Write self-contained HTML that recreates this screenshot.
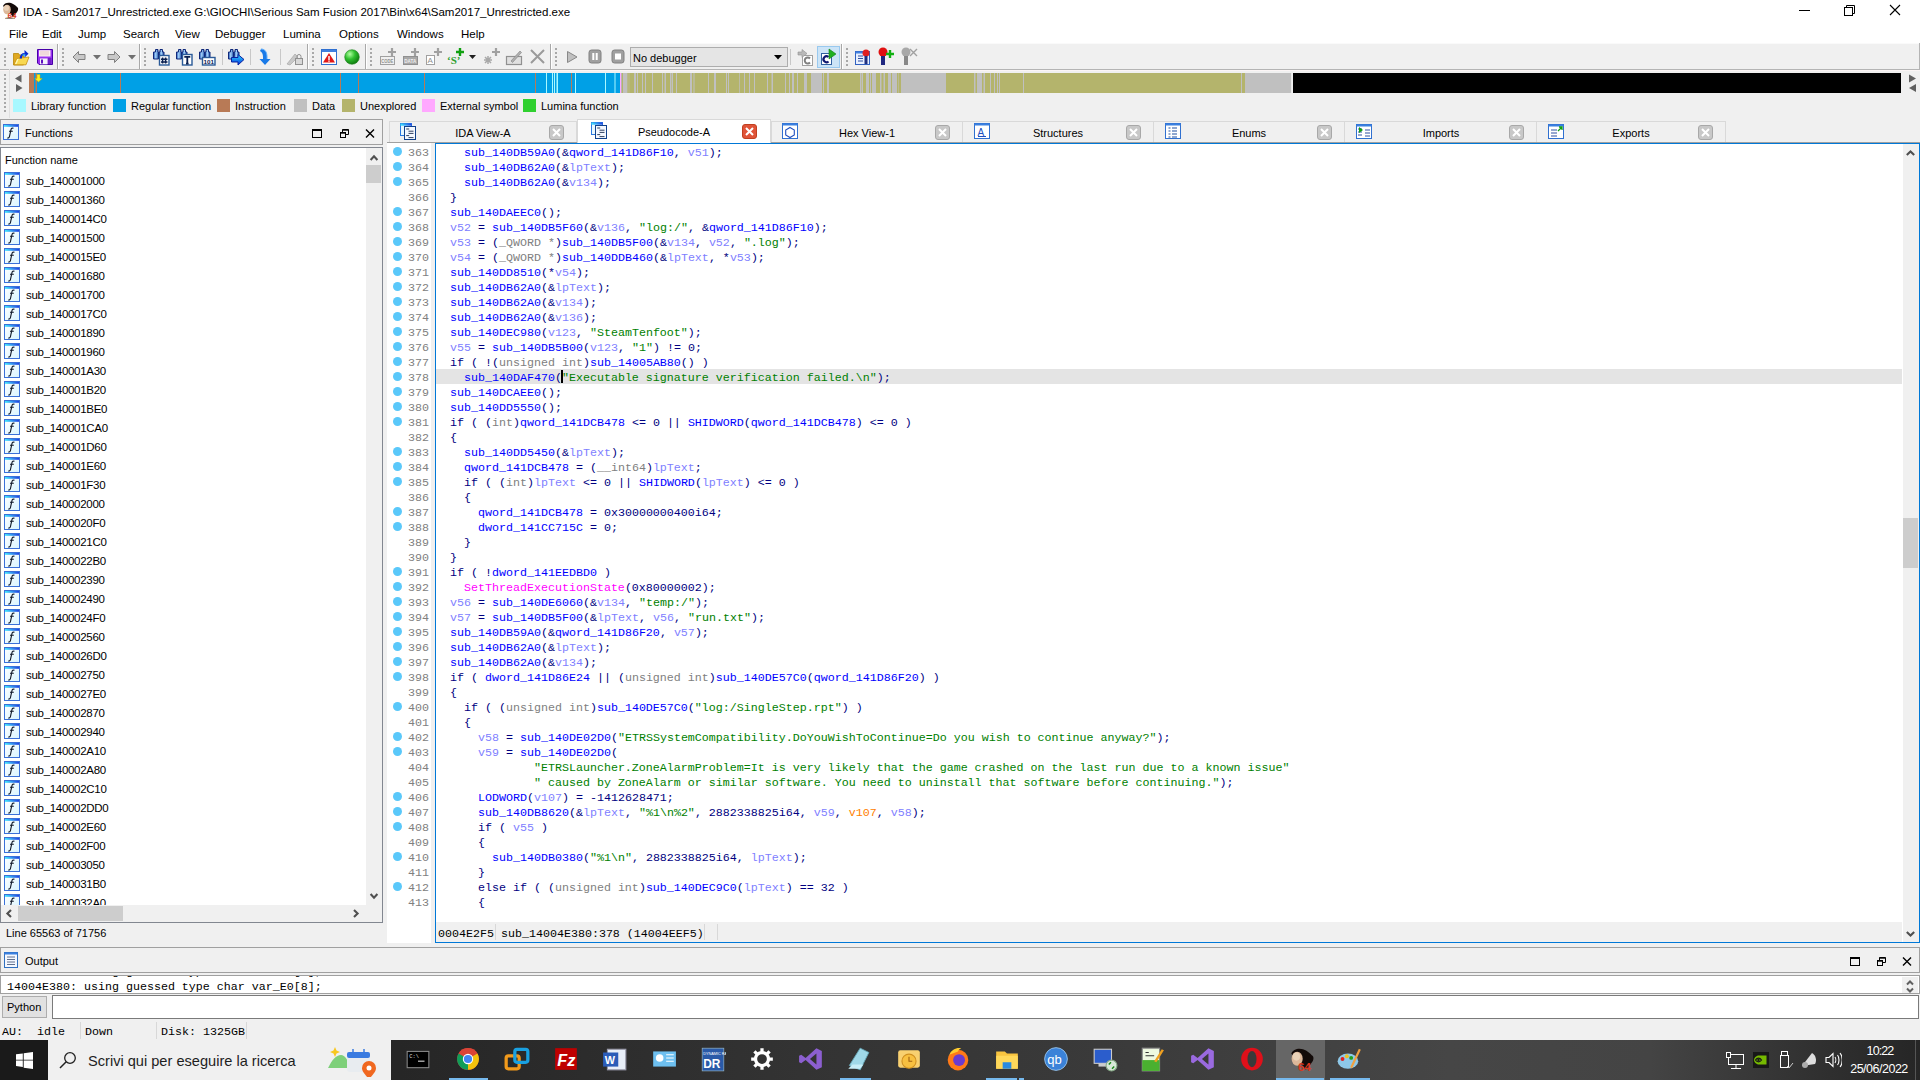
<!DOCTYPE html><html><head><meta charset="utf-8"><style>
*{margin:0;padding:0;box-sizing:border-box}
html,body{width:1920px;height:1080px;overflow:hidden;background:#f0f0f0}
body{position:relative;font-family:"Liberation Sans",sans-serif;font-size:11px;color:#000}
div{position:absolute}
.t{white-space:pre;line-height:13px;font-size:11px}
.m{font-family:"Liberation Mono",monospace;font-size:11.67px;white-space:pre;line-height:15px}
.n{color:#000080}.b{color:#0000ff}.v{color:#8080ff}.g{color:#808080}.s{color:#008000}.p{color:#ff00ff}.o{color:#ff8000}
</style></head><body><svg width="0" height="0" style="position:absolute"><defs><linearGradient id="tb" x1="0" y1="0" x2="1" y2="0"><stop offset="0" stop-color="#40e8ff"/><stop offset="1" stop-color="#2040e0"/></linearGradient></defs></svg><div style="left:0px;top:0px;width:1920px;height:43px;background:#fff"></div>
<svg style="position:absolute;left:0px;top:0px;" width="24" height="24" viewBox="0 0 24 24"><path d="M3 6c1-3 5-4 8-3 3 1 5 3 6 4 2 1 1 4 0 5-1 2-3 3-4 5L9 12z" fill="#120a08"/><ellipse cx="7" cy="9.5" rx="3.8" ry="4.8" fill="#dcb89a"/><ellipse cx="6.5" cy="8" rx="2.5" ry="2.8" fill="#ead2b8"/><path d="M5 18.5c2-1 6-1 10 0" stroke="#b89070" stroke-width="1"/><text x="7.5" y="18" font-size="8" font-family="Liberation Sans" fill="#d83820" font-weight="bold">64</text></svg>
<div class="t" style="left:23px;top:6px;font-size:11.5px">IDA - Sam2017_Unrestricted.exe G:\GIOCHI\Serious Sam Fusion 2017\Bin\x64\Sam2017_Unrestricted.exe</div>
<svg style="position:absolute;left:1795px;top:4px;" width="20" height="14" viewBox="0 0 20 14"><line x1="4" y1="6.5" x2="15" y2="6.5" stroke="#000" stroke-width="1"/></svg>
<svg style="position:absolute;left:1840px;top:2px;" width="20" height="16" viewBox="0 0 20 16"><rect x="4.5" y="5.5" width="8" height="8" fill="none" stroke="#000"/><path d="M6.5 5.5V3.5H14.5V11.5H12.5" fill="none" stroke="#000"/></svg>
<svg style="position:absolute;left:1885px;top:2px;" width="20" height="16" viewBox="0 0 20 16"><path d="M5 3L15 13M15 3L5 13" stroke="#000" stroke-width="1.1"/></svg>
<div class="t" style="left:9px;top:28px;font-size:11.5px">File</div>
<div class="t" style="left:42px;top:28px;font-size:11.5px">Edit</div>
<div class="t" style="left:78px;top:28px;font-size:11.5px">Jump</div>
<div class="t" style="left:123px;top:28px;font-size:11.5px">Search</div>
<div class="t" style="left:175px;top:28px;font-size:11.5px">View</div>
<div class="t" style="left:215px;top:28px;font-size:11.5px">Debugger</div>
<div class="t" style="left:283px;top:28px;font-size:11.5px">Lumina</div>
<div class="t" style="left:339px;top:28px;font-size:11.5px">Options</div>
<div class="t" style="left:397px;top:28px;font-size:11.5px">Windows</div>
<div class="t" style="left:461px;top:28px;font-size:11.5px">Help</div>
<div style="left:0px;top:43px;width:1920px;height:28px;background:#f0f0f0;border-top:1px solid #fafafa;border-bottom:1px solid #fafafa"></div>
<div style="left:0px;top:69px;width:1920px;height:1px;background:#b4b4b4"></div>
<div style="left:1919px;top:43px;width:1px;height:27px;background:#b4b4b4"></div>
<svg style="position:absolute;left:4px;top:48px;" width="2" height="20" viewBox="0 0 2 20"><rect x="0" y="0" width="2" height="2" fill="#a8a8a8"/><rect x="0" y="4" width="2" height="2" fill="#a8a8a8"/><rect x="0" y="8" width="2" height="2" fill="#a8a8a8"/><rect x="0" y="12" width="2" height="2" fill="#a8a8a8"/><rect x="0" y="16" width="2" height="2" fill="#a8a8a8"/></svg>
<svg style="position:absolute;left:62px;top:48px;" width="2" height="20" viewBox="0 0 2 20"><rect x="0" y="0" width="2" height="2" fill="#a8a8a8"/><rect x="0" y="4" width="2" height="2" fill="#a8a8a8"/><rect x="0" y="8" width="2" height="2" fill="#a8a8a8"/><rect x="0" y="12" width="2" height="2" fill="#a8a8a8"/><rect x="0" y="16" width="2" height="2" fill="#a8a8a8"/></svg>
<svg style="position:absolute;left:144px;top:48px;" width="2" height="20" viewBox="0 0 2 20"><rect x="0" y="0" width="2" height="2" fill="#a8a8a8"/><rect x="0" y="4" width="2" height="2" fill="#a8a8a8"/><rect x="0" y="8" width="2" height="2" fill="#a8a8a8"/><rect x="0" y="12" width="2" height="2" fill="#a8a8a8"/><rect x="0" y="16" width="2" height="2" fill="#a8a8a8"/></svg>
<svg style="position:absolute;left:312px;top:48px;" width="2" height="20" viewBox="0 0 2 20"><rect x="0" y="0" width="2" height="2" fill="#a8a8a8"/><rect x="0" y="4" width="2" height="2" fill="#a8a8a8"/><rect x="0" y="8" width="2" height="2" fill="#a8a8a8"/><rect x="0" y="12" width="2" height="2" fill="#a8a8a8"/><rect x="0" y="16" width="2" height="2" fill="#a8a8a8"/></svg>
<svg style="position:absolute;left:370px;top:48px;" width="2" height="20" viewBox="0 0 2 20"><rect x="0" y="0" width="2" height="2" fill="#a8a8a8"/><rect x="0" y="4" width="2" height="2" fill="#a8a8a8"/><rect x="0" y="8" width="2" height="2" fill="#a8a8a8"/><rect x="0" y="12" width="2" height="2" fill="#a8a8a8"/><rect x="0" y="16" width="2" height="2" fill="#a8a8a8"/></svg>
<svg style="position:absolute;left:555px;top:48px;" width="2" height="20" viewBox="0 0 2 20"><rect x="0" y="0" width="2" height="2" fill="#a8a8a8"/><rect x="0" y="4" width="2" height="2" fill="#a8a8a8"/><rect x="0" y="8" width="2" height="2" fill="#a8a8a8"/><rect x="0" y="12" width="2" height="2" fill="#a8a8a8"/><rect x="0" y="16" width="2" height="2" fill="#a8a8a8"/></svg>
<svg style="position:absolute;left:846px;top:48px;" width="2" height="20" viewBox="0 0 2 20"><rect x="0" y="0" width="2" height="2" fill="#a8a8a8"/><rect x="0" y="4" width="2" height="2" fill="#a8a8a8"/><rect x="0" y="8" width="2" height="2" fill="#a8a8a8"/><rect x="0" y="12" width="2" height="2" fill="#a8a8a8"/><rect x="0" y="16" width="2" height="2" fill="#a8a8a8"/></svg>
<div style="left:57px;top:44px;width:2px;height:25px;background:#a8a8a8;border-right:1px solid #fff"></div>
<div style="left:139px;top:44px;width:2px;height:25px;background:#a8a8a8;border-right:1px solid #fff"></div>
<div style="left:307px;top:44px;width:2px;height:25px;background:#a8a8a8;border-right:1px solid #fff"></div>
<div style="left:365px;top:44px;width:2px;height:25px;background:#a8a8a8;border-right:1px solid #fff"></div>
<div style="left:550px;top:44px;width:2px;height:25px;background:#a8a8a8;border-right:1px solid #fff"></div>
<div style="left:841px;top:44px;width:2px;height:25px;background:#a8a8a8;border-right:1px solid #fff"></div>
<div style="left:222px;top:49px;width:1px;height:16px;background:#c8c8c8"></div>
<div style="left:250px;top:49px;width:1px;height:16px;background:#c8c8c8"></div>
<div style="left:280px;top:49px;width:1px;height:16px;background:#c8c8c8"></div>
<div style="left:790px;top:49px;width:1px;height:16px;background:#c8c8c8"></div>
<svg style="position:absolute;left:13px;top:49px;" width="17" height="17" viewBox="0 0 17 17"><path d="M0.5 4.5h5l1 1.5h4v10H0.5z" fill="#e0a820" stroke="#b88808" stroke-width=".8"/><path d="M1.2 15.8L4 9.5 16 8 13 15.8z" fill="#f8d850" stroke="#c89010" stroke-width=".8"/><path d="M1.8 15l2.4-5 1.5-.2-2 5z" fill="#fff8b0"/><path d="M7.8 9.5c0-3 1.5-4.5 4-4.5" fill="none" stroke="#0828d0" stroke-width="2.2"/><path d="M11.5 1l4 3.8-4 3.8z" fill="#0828d0"/><path d="M9.5 6h3" stroke="#30e8ff" stroke-width="1"/></svg>
<svg style="position:absolute;left:37px;top:49px;" width="16" height="16" viewBox="0 0 16 16"><path d="M0.5 0.5h15v15H2l-1.5-1.5z" fill="#9a30f0" stroke="#4800a8" stroke-width="1"/><rect x="2" y="1.2" width="11.5" height="6.3" fill="#fbf0f0"/><rect x="3" y="2" width="9" height="4.5" fill="#f0d8dc"/><rect x="3" y="9.5" width="7.5" height="5.8" fill="#f4f4fc"/><rect x="4" y="10.5" width="2" height="4" fill="#6010c0"/><rect x="11" y="9" width="3.5" height="6" fill="#7020c8"/></svg>
<svg style="position:absolute;left:72px;top:50px;" width="14" height="14" viewBox="0 0 14 14"><path d="M1 7L6.5 1.5V4.5H13V9.5H6.5V12.5z" fill="#c8c8c8" stroke="#808080" stroke-width="1"/></svg>
<svg style="position:absolute;left:93px;top:55px;" width="8" height="5" viewBox="0 0 8 5"><path d="M0 0H8L4 4.5z" fill="#707070"/></svg>
<svg style="position:absolute;left:107px;top:50px;" width="14" height="14" viewBox="0 0 14 14"><path d="M13 7L7.5 1.5V4.5H1V9.5H7.5V12.5z" fill="#c8c8c8" stroke="#808080" stroke-width="1"/></svg>
<svg style="position:absolute;left:128px;top:55px;" width="8" height="5" viewBox="0 0 8 5"><path d="M0 0H8L4 4.5z" fill="#707070"/></svg>
<svg style="position:absolute;left:153px;top:48px;" width="17" height="18" viewBox="0 0 17 18"><defs><linearGradient id="bg153" x1="0" y1="0" x2="1" y2="0"><stop offset="0" stop-color="#2050b0"/><stop offset=".45" stop-color="#a8d8ff"/><stop offset="1" stop-color="#1848a0"/></linearGradient></defs><path d="M2.5 1.5h2.5v2.5h.5v7H0.5v-7h2z" fill="url(#bg153)" stroke="#10287a" stroke-width="1"/><path d="M7 1.5h2.5v2.5h1.5v7H6v-7h1z" fill="url(#bg153)" stroke="#10287a" stroke-width="1"/><rect x="5" y="5.5" width="1.5" height="2" fill="#10287a"/><rect x="6.5" y="7.5" width="9.5" height="9.5" fill="#fff" stroke="#2a5a98" stroke-width="1.4"/><path d="M9.6 9.5v6M12.6 9.5v6M8 11.3h6.5M8 14h6.5" stroke="#0a2050" stroke-width="1.5"/></svg>
<svg style="position:absolute;left:176px;top:48px;" width="17" height="18" viewBox="0 0 17 18"><defs><linearGradient id="bg176" x1="0" y1="0" x2="1" y2="0"><stop offset="0" stop-color="#2050b0"/><stop offset=".45" stop-color="#a8d8ff"/><stop offset="1" stop-color="#1848a0"/></linearGradient></defs><path d="M2.5 1.5h2.5v2.5h.5v7H0.5v-7h2z" fill="url(#bg176)" stroke="#10287a" stroke-width="1"/><path d="M7 1.5h2.5v2.5h1.5v7H6v-7h1z" fill="url(#bg176)" stroke="#10287a" stroke-width="1"/><rect x="5" y="5.5" width="1.5" height="2" fill="#10287a"/><rect x="6.5" y="6.5" width="9.5" height="10.5" fill="#fff" stroke="#2a5a98" stroke-width="1.4"/><path d="M8.3 8.8h6M11.3 8.8v6.8M10 15.6h2.6" stroke="#0a2050" stroke-width="1.8"/></svg>
<svg style="position:absolute;left:199px;top:48px;" width="17" height="18" viewBox="0 0 17 18"><defs><linearGradient id="bg199" x1="0" y1="0" x2="1" y2="0"><stop offset="0" stop-color="#2050b0"/><stop offset=".45" stop-color="#a8d8ff"/><stop offset="1" stop-color="#1848a0"/></linearGradient></defs><path d="M2.5 1.5h2.5v2.5h.5v7H0.5v-7h2z" fill="url(#bg199)" stroke="#10287a" stroke-width="1"/><path d="M7 1.5h2.5v2.5h1.5v7H6v-7h1z" fill="url(#bg199)" stroke="#10287a" stroke-width="1"/><rect x="5" y="5.5" width="1.5" height="2" fill="#10287a"/><rect x="3.5" y="9.5" width="12.5" height="7.5" fill="#fff" stroke="#2a5a98" stroke-width="1.4"/><text x="4.6" y="15.6" font-size="6" font-family="Liberation Sans" font-weight="bold" fill="#0a2050" textLength="10.5" lengthAdjust="spacingAndGlyphs">101</text></svg>
<svg style="position:absolute;left:228px;top:48px;" width="17" height="18" viewBox="0 0 17 18"><defs><linearGradient id="bg228" x1="0" y1="0" x2="1" y2="0"><stop offset="0" stop-color="#2050b0"/><stop offset=".45" stop-color="#a8d8ff"/><stop offset="1" stop-color="#1848a0"/></linearGradient></defs><path d="M2.5 1.5h2.5v2.5h.5v7H0.5v-7h2z" fill="url(#bg228)" stroke="#10287a" stroke-width="1"/><path d="M7 1.5h2.5v2.5h1.5v7H6v-7h1z" fill="url(#bg228)" stroke="#10287a" stroke-width="1"/><rect x="5" y="5.5" width="1.5" height="2" fill="#10287a"/><defs><linearGradient id="ag" x1="0" y1="0" x2="0" y2="1"><stop offset="0" stop-color="#30e0ff"/><stop offset="1" stop-color="#0030e0"/></linearGradient></defs><path d="M3.5 9.5h6.5V6.5l6 5-6 5.5v-3H3.5z" fill="url(#ag)" stroke="#0820a0" stroke-width="1"/></svg>
<svg style="position:absolute;left:258px;top:48px;" width="14" height="18" viewBox="0 0 14 18"><path d="M3 1c4 0 6 3 6 8v2h3.5L7 17 1.5 11H5V9c0-3-1-5-3-6z" fill="#1a7ae8"/><path d="M3 1c4 0 6 3 6 8v2" stroke="#60b0ff" stroke-width="1" fill="none"/></svg>
<svg style="position:absolute;left:286px;top:48px;" width="17" height="18" viewBox="0 0 17 18"><path d="M1 16l8-10 3 3-8 8z" fill="#c8c8c8" stroke="#a0a0a0" stroke-width=".6"/><rect x="9.5" y="10.5" width="7" height="6" fill="#d8d8d8" stroke="#909090"/><path d="M11 10.5v-2a2 2 0 0 1 4 0v2" fill="none" stroke="#909090"/></svg>
<svg style="position:absolute;left:321px;top:49px;" width="16" height="16" viewBox="0 0 16 16"><rect x="0.5" y="0.5" width="15" height="15" fill="#fff" stroke="#3070d0"/><rect x="1" y="1" width="14" height="2" fill="#4080e0"/><path d="M8 4L14 13.5H2z" fill="#e01818"/><rect x="7.3" y="7" width="1.4" height="4" fill="#fff"/><rect x="7.3" y="11.5" width="1.4" height="1.3" fill="#fff"/></svg>
<svg style="position:absolute;left:344px;top:49px;" width="16" height="16" viewBox="0 0 16 16"><defs><radialGradient id="gg" cx="0.35" cy="0.3" r="0.7"><stop offset="0" stop-color="#b0ffa0"/><stop offset="0.5" stop-color="#30c030"/><stop offset="1" stop-color="#108010"/></radialGradient></defs><circle cx="8" cy="8" r="7.3" fill="url(#gg)" stroke="#208020" stroke-width=".6"/></svg>
<svg style="position:absolute;left:379px;top:47px;" width="18" height="19" viewBox="0 0 18 19"><rect x="1.5" y="9.5" width="14" height="8" fill="#f0f0f0" stroke="#a0a0a0"/><text x="2.2" y="16.3" font-size="5" font-family="Liberation Sans" font-weight="bold" fill="#909090" textLength="12" lengthAdjust="spacingAndGlyphs">CODE</text><path d="M13 1v8M9 5h8" stroke="#a0a0a0" stroke-width="2.2"/></svg>
<svg style="position:absolute;left:402px;top:47px;" width="18" height="19" viewBox="0 0 18 19"><rect x="1.5" y="9.5" width="14" height="8" fill="#a8a8a8" stroke="#909090"/><text x="2.2" y="16.3" font-size="5" font-family="Liberation Sans" font-weight="bold" fill="#f0f0f0" textLength="12" lengthAdjust="spacingAndGlyphs">DATA</text><path d="M13 1v8M9 5h8" stroke="#a0a0a0" stroke-width="2.2"/></svg>
<svg style="position:absolute;left:425px;top:47px;" width="18" height="19" viewBox="0 0 18 19"><rect x="1.5" y="8.5" width="8" height="9" fill="#fff" stroke="#a0a0a0"/><text x="2.5" y="16" font-size="8" font-family="Liberation Sans" fill="#909090">A</text><path d="M13 1v8M9 5h8" stroke="#a0a0a0" stroke-width="2.2"/></svg>
<svg style="position:absolute;left:447px;top:47px;" width="18" height="19" viewBox="0 0 18 19"><text x="0" y="17" font-size="11" font-family="Liberation Serif" font-weight="bold" fill="#30a030">‘S’</text><path d="M13 1v8M9 5h8" stroke="#10a010" stroke-width="2.4"/></svg>
<svg style="position:absolute;left:469px;top:55px;" width="7" height="5" viewBox="0 0 7 5"><path d="M0 0H7L3.5 4z" fill="#202020"/></svg>
<svg style="position:absolute;left:483px;top:47px;" width="18" height="19" viewBox="0 0 18 19"><path d="M5 9v8M1 13h8M2 10l6 6M8 10l-6 6" stroke="#a8a8a8" stroke-width="1.5"/><path d="M13 1v8M9 5h8" stroke="#a0a0a0" stroke-width="2.2"/></svg>
<svg style="position:absolute;left:505px;top:47px;" width="18" height="19" viewBox="0 0 18 19"><rect x="1.5" y="9.5" width="15" height="8" fill="#e0e0e0" stroke="#909090" stroke-width="1.2"/><path d="M6 14l9-10 1.5 1.5-9 10z" fill="#b0b0b0" stroke="#808080" stroke-width=".6"/></svg>
<svg style="position:absolute;left:529px;top:48px;" width="17" height="17" viewBox="0 0 17 17"><path d="M2 2L15 15M15 2L2 15" stroke="#9a9a9a" stroke-width="2"/></svg>
<svg style="position:absolute;left:566px;top:50px;" width="12" height="14" viewBox="0 0 12 14"><path d="M1.5 1.5L11 7l-9.5 5.5z" fill="#c0c0c0" stroke="#888" stroke-width="1"/></svg>
<svg style="position:absolute;left:588px;top:49px;" width="14" height="15" viewBox="0 0 14 15"><rect x="1" y="1" width="12" height="13" rx="2.5" fill="#a0a0a0" stroke="#808080"/><rect x="4.3" y="4" width="2" height="7" fill="#fff"/><rect x="7.7" y="4" width="2" height="7" fill="#fff"/></svg>
<svg style="position:absolute;left:611px;top:49px;" width="14" height="15" viewBox="0 0 14 15"><rect x="1" y="1" width="12" height="13" rx="2.5" fill="#a0a0a0" stroke="#808080"/><rect x="4" y="4.5" width="6" height="6" fill="#fff"/></svg>
<div style="left:630px;top:47px;width:158px;height:20px;background:#e5e5e5;border:1px solid #adadad"><div class="t" style="left:2px;top:4px;font-size:11px">No debugger</div></div>
<svg style="position:absolute;left:774px;top:55px;" width="9" height="6" viewBox="0 0 9 6"><path d="M0 0H8L4 4.5z" fill="#000"/></svg>
<svg style="position:absolute;left:797px;top:48px;" width="17" height="18" viewBox="0 0 17 18"><rect x="5.5" y="7.5" width="10" height="10" fill="#fff" stroke="#a0a0a0"/><path d="M13 10.5a3 3 0 1 0 0 4" fill="none" stroke="#808080" stroke-width="2"/><path d="M1 4h4V1.5l5 4-5 4V7H1z" fill="#b8b8b8" stroke="#909090" stroke-width=".6"/></svg>
<div style="left:817px;top:46px;width:23px;height:22px;background:#cce4f7;border:1px solid #99c9ef"></div>
<svg style="position:absolute;left:820px;top:48px;" width="18" height="18" viewBox="0 0 18 18"><rect x="1.5" y="5.5" width="10" height="11" fill="#fff" stroke="#3060a0"/><path d="M8.5 9a3 3 0 1 0 0 4.5" fill="none" stroke="#101870" stroke-width="2.2"/><path d="M9 1v10l7-5z" fill="#20b020" stroke="#108010" stroke-width=".6"/></svg>
<svg style="position:absolute;left:854px;top:48px;" width="18" height="18" viewBox="0 0 18 18"><rect x="1.5" y="3.5" width="14" height="13" fill="#e8f0ff" stroke="#3060c0"/><rect x="1.5" y="3.5" width="14" height="2" fill="#4080e0"/><path d="M4 8h5M4 10.5h5M4 13h5" stroke="#3050a0"/><circle cx="12" cy="5" r="3.5" fill="#e02020"/><rect x="10.5" y="8" width="3" height="8" fill="#203080"/></svg>
<svg style="position:absolute;left:877px;top:47px;" width="18" height="19" viewBox="0 0 18 19"><circle cx="6" cy="5" r="4.5" fill="#e01010"/><rect x="4" y="9" width="4" height="9" fill="#202880"/><path d="M13 3v8M9 7h8" stroke="#10b010" stroke-width="2.4"/></svg>
<svg style="position:absolute;left:900px;top:47px;" width="18" height="19" viewBox="0 0 18 19"><circle cx="6" cy="5" r="4.5" fill="#a8a8a8"/><rect x="4" y="9" width="4" height="9" fill="#888"/><path d="M10 2l7 7M17 2l-7 7" stroke="#a0a0a0" stroke-width="1.4"/></svg>
<div style="left:0px;top:70px;width:1920px;height:49px;background:#f0f0f0;border-top:1px solid #fbf5f5"></div>
<svg style="position:absolute;left:4px;top:74px;" width="2" height="40" viewBox="0 0 2 40"><rect x="0" y="0" width="2" height="2" fill="#a8a8a8"/><rect x="0" y="4" width="2" height="2" fill="#a8a8a8"/><rect x="0" y="8" width="2" height="2" fill="#a8a8a8"/><rect x="0" y="12" width="2" height="2" fill="#a8a8a8"/><rect x="0" y="16" width="2" height="2" fill="#a8a8a8"/><rect x="0" y="20" width="2" height="2" fill="#a8a8a8"/><rect x="0" y="24" width="2" height="2" fill="#a8a8a8"/><rect x="0" y="28" width="2" height="2" fill="#a8a8a8"/><rect x="0" y="32" width="2" height="2" fill="#a8a8a8"/><rect x="0" y="36" width="2" height="2" fill="#a8a8a8"/></svg>
<div style="left:9px;top:69px;width:1px;height:49px;background:#e0e0e0"></div>
<svg style="position:absolute;left:13px;top:73px;" width="10" height="20" viewBox="0 0 10 20"><path d="M8.5 1.5v8L2 5.5z" fill="#606060"/><path d="M3 11v8l6.5-4z" fill="#606060"/></svg>
<svg style="position:absolute;left:1906px;top:73px;" width="12" height="20" viewBox="0 0 12 20"><path d="M3 1.5v8L10 5.5z" fill="#606060"/><path d="M10 11v8L3 15z" fill="#606060"/></svg>
<svg style="position:absolute;left:29px;top:73px;" width="1872" height="20" viewBox="0 0 1872 20"><rect x="0.0" y="0" width="592.5" height="20" fill="#00a0e6"/><rect x="0.0" y="0" width="5.0" height="20" fill="#b87a56"/><rect x="6.5" y="0" width="1.5" height="20" fill="#b87a56"/><rect x="91.0" y="0" width="1.0" height="20" fill="#b87a56"/><rect x="311.0" y="0" width="1.0" height="20" fill="#b87a56"/><rect x="329.0" y="0" width="1.0" height="20" fill="#b87a56"/><rect x="395.0" y="0" width="1.0" height="20" fill="#b87a56"/><rect x="506.0" y="0" width="1.0" height="20" fill="#b87a56"/><rect x="517.0" y="0" width="1.0" height="20" fill="#a8f8ff"/><rect x="523.0" y="0" width="1.0" height="20" fill="#a8f8ff"/><rect x="525.0" y="0" width="1.0" height="20" fill="#a8f8ff"/><rect x="527.5" y="0" width="1.5" height="20" fill="#a8f8ff"/><rect x="542.0" y="0" width="1.0" height="20" fill="#b87a56"/><rect x="546.0" y="0" width="1.0" height="20" fill="#a8f8ff"/><rect x="576.0" y="0" width="1.0" height="20" fill="#a8f8ff"/><rect x="585.5" y="0" width="1.0" height="20" fill="#a8f8ff"/><rect x="591.0" y="0" width="1.5" height="20" fill="#ffa8ff"/><rect x="592.5" y="0" width="669.5" height="20" fill="#b4b46c"/><rect x="594.0" y="0" width="4.4" height="20" fill="#c0c0c0"/><rect x="599.8" y="0" width="0.4" height="20" fill="#c0c0c0"/><rect x="605.0" y="0" width="2.0" height="20" fill="#c0c0c0"/><rect x="608.0" y="0" width="1.0" height="20" fill="#c0c0c0"/><rect x="613.0" y="0" width="1.0" height="20" fill="#c0c0c0"/><rect x="616.0" y="0" width="1.0" height="20" fill="#c0c0c0"/><rect x="623.0" y="0" width="1.0" height="20" fill="#c0c0c0"/><rect x="633.0" y="0" width="1.0" height="20" fill="#c0c0c0"/><rect x="635.5" y="0" width="1.5" height="20" fill="#c0c0c0"/><rect x="641.0" y="0" width="1.5" height="20" fill="#c0c0c0"/><rect x="643.0" y="0" width="1.0" height="20" fill="#c0c0c0"/><rect x="647.0" y="0" width="1.0" height="20" fill="#c0c0c0"/><rect x="661.0" y="0" width="2.0" height="20" fill="#c0c0c0"/><rect x="664.5" y="0" width="1.0" height="20" fill="#c0c0c0"/><rect x="679.0" y="0" width="1.0" height="20" fill="#c0c0c0"/><rect x="685.0" y="0" width="2.0" height="20" fill="#c0c0c0"/><rect x="697.0" y="0" width="1.0" height="20" fill="#c0c0c0"/><rect x="699.0" y="0" width="1.0" height="20" fill="#c0c0c0"/><rect x="710.0" y="0" width="0.7" height="20" fill="#c0c0c0"/><rect x="715.0" y="0" width="1.0" height="20" fill="#c0c0c0"/><rect x="720.0" y="0" width="1.0" height="20" fill="#c0c0c0"/><rect x="725.0" y="0" width="1.0" height="20" fill="#c0c0c0"/><rect x="738.0" y="0" width="1.0" height="20" fill="#c0c0c0"/><rect x="742.5" y="0" width="1.5" height="20" fill="#c0c0c0"/><rect x="756.0" y="0" width="1.0" height="20" fill="#c0c0c0"/><rect x="760.0" y="0" width="1.0" height="20" fill="#c0c0c0"/><rect x="763.0" y="0" width="2.0" height="20" fill="#c0c0c0"/><rect x="768.0" y="0" width="1.0" height="20" fill="#c0c0c0"/><rect x="775.0" y="0" width="3.0" height="20" fill="#c0c0c0"/><rect x="782.0" y="0" width="11.0" height="20" fill="#c0c0c0"/><rect x="794.0" y="0" width="1.0" height="20" fill="#c0c0c0"/><rect x="798.0" y="0" width="2.0" height="20" fill="#c0c0c0"/><rect x="831.0" y="0" width="1.5" height="20" fill="#c0c0c0"/><rect x="833.0" y="0" width="1.0" height="20" fill="#c0c0c0"/><rect x="837.0" y="0" width="3.0" height="20" fill="#c0c0c0"/><rect x="841.0" y="0" width="1.0" height="20" fill="#c0c0c0"/><rect x="843.0" y="0" width="4.0" height="20" fill="#c0c0c0"/><rect x="851.0" y="0" width="1.5" height="20" fill="#c0c0c0"/><rect x="854.5" y="0" width="1.5" height="20" fill="#c0c0c0"/><rect x="859.0" y="0" width="3.0" height="20" fill="#c0c0c0"/><rect x="863.0" y="0" width="5.0" height="20" fill="#c0c0c0"/><rect x="869.5" y="0" width="0.5" height="20" fill="#c0c0c0"/><rect x="872.0" y="0" width="45.0" height="20" fill="#c0c0c0"/><rect x="945.0" y="0" width="1.5" height="20" fill="#c0c0c0"/><rect x="948.0" y="0" width="5.0" height="20" fill="#c0c0c0"/><rect x="954.5" y="0" width="1.5" height="20" fill="#c0c0c0"/><rect x="961.0" y="0" width="1.0" height="20" fill="#c0c0c0"/><rect x="965.0" y="0" width="1.0" height="20" fill="#c0c0c0"/><rect x="968.0" y="0" width="1.0" height="20" fill="#c0c0c0"/><rect x="970.0" y="0" width="1.0" height="20" fill="#c0c0c0"/><rect x="994.0" y="0" width="1.0" height="20" fill="#c0c0c0"/><rect x="1212.0" y="0" width="1.0" height="20" fill="#c0c0c0"/><rect x="1216.0" y="0" width="46.0" height="20" fill="#c0c0c0"/><rect x="1262.0" y="0" width="1.0" height="20" fill="#e8e8e8"/><rect x="1264.0" y="0" width="608.0" height="20" fill="#000"/><path d="M8 1.5h3v4h2.2L9.5 9 5.8 5.5H8z" fill="#f8f020" stroke="#c8a800" stroke-width=".5"/></svg>
<div style="left:13px;top:99px;width:13px;height:13px;background:#a8f8ff"></div>
<div class="t" style="left:31px;top:100px;">Library function</div>
<div style="left:113px;top:99px;width:13px;height:13px;background:#00a0e6"></div>
<div class="t" style="left:131px;top:100px;">Regular function</div>
<div style="left:217px;top:99px;width:13px;height:13px;background:#b87a56"></div>
<div class="t" style="left:235px;top:100px;">Instruction</div>
<div style="left:294px;top:99px;width:13px;height:13px;background:#c0c0c0"></div>
<div class="t" style="left:312px;top:100px;">Data</div>
<div style="left:342px;top:99px;width:13px;height:13px;background:#b4b46c"></div>
<div class="t" style="left:360px;top:100px;">Unexplored</div>
<div style="left:422px;top:99px;width:13px;height:13px;background:#ffa8ff"></div>
<div class="t" style="left:440px;top:100px;">External symbol</div>
<div style="left:523px;top:99px;width:13px;height:13px;background:#30d030"></div>
<div class="t" style="left:541px;top:100px;">Lumina function</div>
<div style="left:0px;top:119px;width:383px;height:26px;background:#f0f0f0;border:1px solid #a0a0a0"></div>
<svg style="position:absolute;left:3px;top:124px;" width="16" height="16" viewBox="0 0 16 16"><defs><linearGradient id="fg" x1="0" y1="0" x2="1" y2="1"><stop offset="0" stop-color="#fff"/><stop offset="1" stop-color="#d8f4ff"/></linearGradient></defs><rect x="0.5" y="0.5" width="15" height="15" fill="url(#fg)" stroke="#3a70d8"/><rect x="1" y="1" width="14" height="1.8" fill="url(#tb)"/><path d="M10.5 4.2c-1.4-.4-2.3.2-2.6 1.6l-1.4 6.6c-.3 1.4-1.1 1.9-2.3 1.5M6 7.3h3.8" fill="none" stroke="#101828" stroke-width="1.1"/></svg>
<div class="t" style="left:25px;top:127px;">Functions</div>
<svg style="position:absolute;left:310px;top:126px;" width="14" height="14" viewBox="0 0 14 14"><rect x="2.5" y="3.5" width="9" height="8" fill="none" stroke="#000"/><rect x="2.5" y="3.5" width="9" height="1.5" fill="#000"/></svg>
<svg style="position:absolute;left:337px;top:126px;" width="14" height="14" viewBox="0 0 14 14"><rect x="3.5" y="6.5" width="5" height="5" fill="none" stroke="#000"/><rect x="3.5" y="6.5" width="5" height="1.2" fill="#000"/><path d="M5.5 6.5v-3h6v5h-3" fill="none" stroke="#000"/><rect x="5.5" y="3.5" width="6" height="1.2" fill="#000"/></svg>
<svg style="position:absolute;left:363px;top:126px;" width="14" height="14" viewBox="0 0 14 14"><path d="M3 3.5L11 11.5M11 3.5L3 11.5" stroke="#000" stroke-width="1.4"/></svg>
<div style="left:0px;top:147px;width:383px;height:776px;background:#fff;border:1px solid #828790"></div>
<div class="t" style="left:5px;top:154px;">Function name</div>
<div style="left:1px;top:149px;width:365px;height:756px;overflow:hidden">
<svg style="position:absolute;left:3px;top:23px;" width="16" height="16" viewBox="0 0 16 16"><defs><linearGradient id="fg0" x1="0" y1="0" x2="1" y2="1"><stop offset="0" stop-color="#fff"/><stop offset="1" stop-color="#d8f4ff"/></linearGradient></defs><rect x="0.5" y="0.5" width="15" height="15" fill="url(#fg0)" stroke="#3a70d8"/><rect x="1" y="1" width="14" height="1.8" fill="url(#tb)"/><path d="M10.5 4.2c-1.4-.4-2.3.2-2.6 1.6l-1.4 6.6c-.3 1.4-1.1 1.9-2.3 1.5M6 7.3h3.8" fill="none" stroke="#101828" stroke-width="1.1"/></svg>
<div class="t" style="left:25px;top:26px;font-size:11.5px;letter-spacing:-0.3px">sub_140001000</div>
<svg style="position:absolute;left:3px;top:42px;" width="16" height="16" viewBox="0 0 16 16"><defs><linearGradient id="fg1" x1="0" y1="0" x2="1" y2="1"><stop offset="0" stop-color="#fff"/><stop offset="1" stop-color="#d8f4ff"/></linearGradient></defs><rect x="0.5" y="0.5" width="15" height="15" fill="url(#fg1)" stroke="#3a70d8"/><rect x="1" y="1" width="14" height="1.8" fill="url(#tb)"/><path d="M10.5 4.2c-1.4-.4-2.3.2-2.6 1.6l-1.4 6.6c-.3 1.4-1.1 1.9-2.3 1.5M6 7.3h3.8" fill="none" stroke="#101828" stroke-width="1.1"/></svg>
<div class="t" style="left:25px;top:45px;font-size:11.5px;letter-spacing:-0.3px">sub_140001360</div>
<svg style="position:absolute;left:3px;top:61px;" width="16" height="16" viewBox="0 0 16 16"><defs><linearGradient id="fg2" x1="0" y1="0" x2="1" y2="1"><stop offset="0" stop-color="#fff"/><stop offset="1" stop-color="#d8f4ff"/></linearGradient></defs><rect x="0.5" y="0.5" width="15" height="15" fill="url(#fg2)" stroke="#3a70d8"/><rect x="1" y="1" width="14" height="1.8" fill="url(#tb)"/><path d="M10.5 4.2c-1.4-.4-2.3.2-2.6 1.6l-1.4 6.6c-.3 1.4-1.1 1.9-2.3 1.5M6 7.3h3.8" fill="none" stroke="#101828" stroke-width="1.1"/></svg>
<div class="t" style="left:25px;top:64px;font-size:11.5px;letter-spacing:-0.3px">sub_1400014C0</div>
<svg style="position:absolute;left:3px;top:80px;" width="16" height="16" viewBox="0 0 16 16"><defs><linearGradient id="fg3" x1="0" y1="0" x2="1" y2="1"><stop offset="0" stop-color="#fff"/><stop offset="1" stop-color="#d8f4ff"/></linearGradient></defs><rect x="0.5" y="0.5" width="15" height="15" fill="url(#fg3)" stroke="#3a70d8"/><rect x="1" y="1" width="14" height="1.8" fill="url(#tb)"/><path d="M10.5 4.2c-1.4-.4-2.3.2-2.6 1.6l-1.4 6.6c-.3 1.4-1.1 1.9-2.3 1.5M6 7.3h3.8" fill="none" stroke="#101828" stroke-width="1.1"/></svg>
<div class="t" style="left:25px;top:83px;font-size:11.5px;letter-spacing:-0.3px">sub_140001500</div>
<svg style="position:absolute;left:3px;top:99px;" width="16" height="16" viewBox="0 0 16 16"><defs><linearGradient id="fg4" x1="0" y1="0" x2="1" y2="1"><stop offset="0" stop-color="#fff"/><stop offset="1" stop-color="#d8f4ff"/></linearGradient></defs><rect x="0.5" y="0.5" width="15" height="15" fill="url(#fg4)" stroke="#3a70d8"/><rect x="1" y="1" width="14" height="1.8" fill="url(#tb)"/><path d="M10.5 4.2c-1.4-.4-2.3.2-2.6 1.6l-1.4 6.6c-.3 1.4-1.1 1.9-2.3 1.5M6 7.3h3.8" fill="none" stroke="#101828" stroke-width="1.1"/></svg>
<div class="t" style="left:25px;top:102px;font-size:11.5px;letter-spacing:-0.3px">sub_1400015E0</div>
<svg style="position:absolute;left:3px;top:118px;" width="16" height="16" viewBox="0 0 16 16"><defs><linearGradient id="fg5" x1="0" y1="0" x2="1" y2="1"><stop offset="0" stop-color="#fff"/><stop offset="1" stop-color="#d8f4ff"/></linearGradient></defs><rect x="0.5" y="0.5" width="15" height="15" fill="url(#fg5)" stroke="#3a70d8"/><rect x="1" y="1" width="14" height="1.8" fill="url(#tb)"/><path d="M10.5 4.2c-1.4-.4-2.3.2-2.6 1.6l-1.4 6.6c-.3 1.4-1.1 1.9-2.3 1.5M6 7.3h3.8" fill="none" stroke="#101828" stroke-width="1.1"/></svg>
<div class="t" style="left:25px;top:121px;font-size:11.5px;letter-spacing:-0.3px">sub_140001680</div>
<svg style="position:absolute;left:3px;top:137px;" width="16" height="16" viewBox="0 0 16 16"><defs><linearGradient id="fg6" x1="0" y1="0" x2="1" y2="1"><stop offset="0" stop-color="#fff"/><stop offset="1" stop-color="#d8f4ff"/></linearGradient></defs><rect x="0.5" y="0.5" width="15" height="15" fill="url(#fg6)" stroke="#3a70d8"/><rect x="1" y="1" width="14" height="1.8" fill="url(#tb)"/><path d="M10.5 4.2c-1.4-.4-2.3.2-2.6 1.6l-1.4 6.6c-.3 1.4-1.1 1.9-2.3 1.5M6 7.3h3.8" fill="none" stroke="#101828" stroke-width="1.1"/></svg>
<div class="t" style="left:25px;top:140px;font-size:11.5px;letter-spacing:-0.3px">sub_140001700</div>
<svg style="position:absolute;left:3px;top:156px;" width="16" height="16" viewBox="0 0 16 16"><defs><linearGradient id="fg7" x1="0" y1="0" x2="1" y2="1"><stop offset="0" stop-color="#fff"/><stop offset="1" stop-color="#d8f4ff"/></linearGradient></defs><rect x="0.5" y="0.5" width="15" height="15" fill="url(#fg7)" stroke="#3a70d8"/><rect x="1" y="1" width="14" height="1.8" fill="url(#tb)"/><path d="M10.5 4.2c-1.4-.4-2.3.2-2.6 1.6l-1.4 6.6c-.3 1.4-1.1 1.9-2.3 1.5M6 7.3h3.8" fill="none" stroke="#101828" stroke-width="1.1"/></svg>
<div class="t" style="left:25px;top:159px;font-size:11.5px;letter-spacing:-0.3px">sub_1400017C0</div>
<svg style="position:absolute;left:3px;top:175px;" width="16" height="16" viewBox="0 0 16 16"><defs><linearGradient id="fg8" x1="0" y1="0" x2="1" y2="1"><stop offset="0" stop-color="#fff"/><stop offset="1" stop-color="#d8f4ff"/></linearGradient></defs><rect x="0.5" y="0.5" width="15" height="15" fill="url(#fg8)" stroke="#3a70d8"/><rect x="1" y="1" width="14" height="1.8" fill="url(#tb)"/><path d="M10.5 4.2c-1.4-.4-2.3.2-2.6 1.6l-1.4 6.6c-.3 1.4-1.1 1.9-2.3 1.5M6 7.3h3.8" fill="none" stroke="#101828" stroke-width="1.1"/></svg>
<div class="t" style="left:25px;top:178px;font-size:11.5px;letter-spacing:-0.3px">sub_140001890</div>
<svg style="position:absolute;left:3px;top:194px;" width="16" height="16" viewBox="0 0 16 16"><defs><linearGradient id="fg9" x1="0" y1="0" x2="1" y2="1"><stop offset="0" stop-color="#fff"/><stop offset="1" stop-color="#d8f4ff"/></linearGradient></defs><rect x="0.5" y="0.5" width="15" height="15" fill="url(#fg9)" stroke="#3a70d8"/><rect x="1" y="1" width="14" height="1.8" fill="url(#tb)"/><path d="M10.5 4.2c-1.4-.4-2.3.2-2.6 1.6l-1.4 6.6c-.3 1.4-1.1 1.9-2.3 1.5M6 7.3h3.8" fill="none" stroke="#101828" stroke-width="1.1"/></svg>
<div class="t" style="left:25px;top:197px;font-size:11.5px;letter-spacing:-0.3px">sub_140001960</div>
<svg style="position:absolute;left:3px;top:213px;" width="16" height="16" viewBox="0 0 16 16"><defs><linearGradient id="fg10" x1="0" y1="0" x2="1" y2="1"><stop offset="0" stop-color="#fff"/><stop offset="1" stop-color="#d8f4ff"/></linearGradient></defs><rect x="0.5" y="0.5" width="15" height="15" fill="url(#fg10)" stroke="#3a70d8"/><rect x="1" y="1" width="14" height="1.8" fill="url(#tb)"/><path d="M10.5 4.2c-1.4-.4-2.3.2-2.6 1.6l-1.4 6.6c-.3 1.4-1.1 1.9-2.3 1.5M6 7.3h3.8" fill="none" stroke="#101828" stroke-width="1.1"/></svg>
<div class="t" style="left:25px;top:216px;font-size:11.5px;letter-spacing:-0.3px">sub_140001A30</div>
<svg style="position:absolute;left:3px;top:232px;" width="16" height="16" viewBox="0 0 16 16"><defs><linearGradient id="fg11" x1="0" y1="0" x2="1" y2="1"><stop offset="0" stop-color="#fff"/><stop offset="1" stop-color="#d8f4ff"/></linearGradient></defs><rect x="0.5" y="0.5" width="15" height="15" fill="url(#fg11)" stroke="#3a70d8"/><rect x="1" y="1" width="14" height="1.8" fill="url(#tb)"/><path d="M10.5 4.2c-1.4-.4-2.3.2-2.6 1.6l-1.4 6.6c-.3 1.4-1.1 1.9-2.3 1.5M6 7.3h3.8" fill="none" stroke="#101828" stroke-width="1.1"/></svg>
<div class="t" style="left:25px;top:235px;font-size:11.5px;letter-spacing:-0.3px">sub_140001B20</div>
<svg style="position:absolute;left:3px;top:251px;" width="16" height="16" viewBox="0 0 16 16"><defs><linearGradient id="fg12" x1="0" y1="0" x2="1" y2="1"><stop offset="0" stop-color="#fff"/><stop offset="1" stop-color="#d8f4ff"/></linearGradient></defs><rect x="0.5" y="0.5" width="15" height="15" fill="url(#fg12)" stroke="#3a70d8"/><rect x="1" y="1" width="14" height="1.8" fill="url(#tb)"/><path d="M10.5 4.2c-1.4-.4-2.3.2-2.6 1.6l-1.4 6.6c-.3 1.4-1.1 1.9-2.3 1.5M6 7.3h3.8" fill="none" stroke="#101828" stroke-width="1.1"/></svg>
<div class="t" style="left:25px;top:254px;font-size:11.5px;letter-spacing:-0.3px">sub_140001BE0</div>
<svg style="position:absolute;left:3px;top:270px;" width="16" height="16" viewBox="0 0 16 16"><defs><linearGradient id="fg13" x1="0" y1="0" x2="1" y2="1"><stop offset="0" stop-color="#fff"/><stop offset="1" stop-color="#d8f4ff"/></linearGradient></defs><rect x="0.5" y="0.5" width="15" height="15" fill="url(#fg13)" stroke="#3a70d8"/><rect x="1" y="1" width="14" height="1.8" fill="url(#tb)"/><path d="M10.5 4.2c-1.4-.4-2.3.2-2.6 1.6l-1.4 6.6c-.3 1.4-1.1 1.9-2.3 1.5M6 7.3h3.8" fill="none" stroke="#101828" stroke-width="1.1"/></svg>
<div class="t" style="left:25px;top:273px;font-size:11.5px;letter-spacing:-0.3px">sub_140001CA0</div>
<svg style="position:absolute;left:3px;top:289px;" width="16" height="16" viewBox="0 0 16 16"><defs><linearGradient id="fg14" x1="0" y1="0" x2="1" y2="1"><stop offset="0" stop-color="#fff"/><stop offset="1" stop-color="#d8f4ff"/></linearGradient></defs><rect x="0.5" y="0.5" width="15" height="15" fill="url(#fg14)" stroke="#3a70d8"/><rect x="1" y="1" width="14" height="1.8" fill="url(#tb)"/><path d="M10.5 4.2c-1.4-.4-2.3.2-2.6 1.6l-1.4 6.6c-.3 1.4-1.1 1.9-2.3 1.5M6 7.3h3.8" fill="none" stroke="#101828" stroke-width="1.1"/></svg>
<div class="t" style="left:25px;top:292px;font-size:11.5px;letter-spacing:-0.3px">sub_140001D60</div>
<svg style="position:absolute;left:3px;top:308px;" width="16" height="16" viewBox="0 0 16 16"><defs><linearGradient id="fg15" x1="0" y1="0" x2="1" y2="1"><stop offset="0" stop-color="#fff"/><stop offset="1" stop-color="#d8f4ff"/></linearGradient></defs><rect x="0.5" y="0.5" width="15" height="15" fill="url(#fg15)" stroke="#3a70d8"/><rect x="1" y="1" width="14" height="1.8" fill="url(#tb)"/><path d="M10.5 4.2c-1.4-.4-2.3.2-2.6 1.6l-1.4 6.6c-.3 1.4-1.1 1.9-2.3 1.5M6 7.3h3.8" fill="none" stroke="#101828" stroke-width="1.1"/></svg>
<div class="t" style="left:25px;top:311px;font-size:11.5px;letter-spacing:-0.3px">sub_140001E60</div>
<svg style="position:absolute;left:3px;top:327px;" width="16" height="16" viewBox="0 0 16 16"><defs><linearGradient id="fg16" x1="0" y1="0" x2="1" y2="1"><stop offset="0" stop-color="#fff"/><stop offset="1" stop-color="#d8f4ff"/></linearGradient></defs><rect x="0.5" y="0.5" width="15" height="15" fill="url(#fg16)" stroke="#3a70d8"/><rect x="1" y="1" width="14" height="1.8" fill="url(#tb)"/><path d="M10.5 4.2c-1.4-.4-2.3.2-2.6 1.6l-1.4 6.6c-.3 1.4-1.1 1.9-2.3 1.5M6 7.3h3.8" fill="none" stroke="#101828" stroke-width="1.1"/></svg>
<div class="t" style="left:25px;top:330px;font-size:11.5px;letter-spacing:-0.3px">sub_140001F30</div>
<svg style="position:absolute;left:3px;top:346px;" width="16" height="16" viewBox="0 0 16 16"><defs><linearGradient id="fg17" x1="0" y1="0" x2="1" y2="1"><stop offset="0" stop-color="#fff"/><stop offset="1" stop-color="#d8f4ff"/></linearGradient></defs><rect x="0.5" y="0.5" width="15" height="15" fill="url(#fg17)" stroke="#3a70d8"/><rect x="1" y="1" width="14" height="1.8" fill="url(#tb)"/><path d="M10.5 4.2c-1.4-.4-2.3.2-2.6 1.6l-1.4 6.6c-.3 1.4-1.1 1.9-2.3 1.5M6 7.3h3.8" fill="none" stroke="#101828" stroke-width="1.1"/></svg>
<div class="t" style="left:25px;top:349px;font-size:11.5px;letter-spacing:-0.3px">sub_140002000</div>
<svg style="position:absolute;left:3px;top:365px;" width="16" height="16" viewBox="0 0 16 16"><defs><linearGradient id="fg18" x1="0" y1="0" x2="1" y2="1"><stop offset="0" stop-color="#fff"/><stop offset="1" stop-color="#d8f4ff"/></linearGradient></defs><rect x="0.5" y="0.5" width="15" height="15" fill="url(#fg18)" stroke="#3a70d8"/><rect x="1" y="1" width="14" height="1.8" fill="url(#tb)"/><path d="M10.5 4.2c-1.4-.4-2.3.2-2.6 1.6l-1.4 6.6c-.3 1.4-1.1 1.9-2.3 1.5M6 7.3h3.8" fill="none" stroke="#101828" stroke-width="1.1"/></svg>
<div class="t" style="left:25px;top:368px;font-size:11.5px;letter-spacing:-0.3px">sub_1400020F0</div>
<svg style="position:absolute;left:3px;top:384px;" width="16" height="16" viewBox="0 0 16 16"><defs><linearGradient id="fg19" x1="0" y1="0" x2="1" y2="1"><stop offset="0" stop-color="#fff"/><stop offset="1" stop-color="#d8f4ff"/></linearGradient></defs><rect x="0.5" y="0.5" width="15" height="15" fill="url(#fg19)" stroke="#3a70d8"/><rect x="1" y="1" width="14" height="1.8" fill="url(#tb)"/><path d="M10.5 4.2c-1.4-.4-2.3.2-2.6 1.6l-1.4 6.6c-.3 1.4-1.1 1.9-2.3 1.5M6 7.3h3.8" fill="none" stroke="#101828" stroke-width="1.1"/></svg>
<div class="t" style="left:25px;top:387px;font-size:11.5px;letter-spacing:-0.3px">sub_1400021C0</div>
<svg style="position:absolute;left:3px;top:403px;" width="16" height="16" viewBox="0 0 16 16"><defs><linearGradient id="fg20" x1="0" y1="0" x2="1" y2="1"><stop offset="0" stop-color="#fff"/><stop offset="1" stop-color="#d8f4ff"/></linearGradient></defs><rect x="0.5" y="0.5" width="15" height="15" fill="url(#fg20)" stroke="#3a70d8"/><rect x="1" y="1" width="14" height="1.8" fill="url(#tb)"/><path d="M10.5 4.2c-1.4-.4-2.3.2-2.6 1.6l-1.4 6.6c-.3 1.4-1.1 1.9-2.3 1.5M6 7.3h3.8" fill="none" stroke="#101828" stroke-width="1.1"/></svg>
<div class="t" style="left:25px;top:406px;font-size:11.5px;letter-spacing:-0.3px">sub_1400022B0</div>
<svg style="position:absolute;left:3px;top:422px;" width="16" height="16" viewBox="0 0 16 16"><defs><linearGradient id="fg21" x1="0" y1="0" x2="1" y2="1"><stop offset="0" stop-color="#fff"/><stop offset="1" stop-color="#d8f4ff"/></linearGradient></defs><rect x="0.5" y="0.5" width="15" height="15" fill="url(#fg21)" stroke="#3a70d8"/><rect x="1" y="1" width="14" height="1.8" fill="url(#tb)"/><path d="M10.5 4.2c-1.4-.4-2.3.2-2.6 1.6l-1.4 6.6c-.3 1.4-1.1 1.9-2.3 1.5M6 7.3h3.8" fill="none" stroke="#101828" stroke-width="1.1"/></svg>
<div class="t" style="left:25px;top:425px;font-size:11.5px;letter-spacing:-0.3px">sub_140002390</div>
<svg style="position:absolute;left:3px;top:441px;" width="16" height="16" viewBox="0 0 16 16"><defs><linearGradient id="fg22" x1="0" y1="0" x2="1" y2="1"><stop offset="0" stop-color="#fff"/><stop offset="1" stop-color="#d8f4ff"/></linearGradient></defs><rect x="0.5" y="0.5" width="15" height="15" fill="url(#fg22)" stroke="#3a70d8"/><rect x="1" y="1" width="14" height="1.8" fill="url(#tb)"/><path d="M10.5 4.2c-1.4-.4-2.3.2-2.6 1.6l-1.4 6.6c-.3 1.4-1.1 1.9-2.3 1.5M6 7.3h3.8" fill="none" stroke="#101828" stroke-width="1.1"/></svg>
<div class="t" style="left:25px;top:444px;font-size:11.5px;letter-spacing:-0.3px">sub_140002490</div>
<svg style="position:absolute;left:3px;top:460px;" width="16" height="16" viewBox="0 0 16 16"><defs><linearGradient id="fg23" x1="0" y1="0" x2="1" y2="1"><stop offset="0" stop-color="#fff"/><stop offset="1" stop-color="#d8f4ff"/></linearGradient></defs><rect x="0.5" y="0.5" width="15" height="15" fill="url(#fg23)" stroke="#3a70d8"/><rect x="1" y="1" width="14" height="1.8" fill="url(#tb)"/><path d="M10.5 4.2c-1.4-.4-2.3.2-2.6 1.6l-1.4 6.6c-.3 1.4-1.1 1.9-2.3 1.5M6 7.3h3.8" fill="none" stroke="#101828" stroke-width="1.1"/></svg>
<div class="t" style="left:25px;top:463px;font-size:11.5px;letter-spacing:-0.3px">sub_1400024F0</div>
<svg style="position:absolute;left:3px;top:479px;" width="16" height="16" viewBox="0 0 16 16"><defs><linearGradient id="fg24" x1="0" y1="0" x2="1" y2="1"><stop offset="0" stop-color="#fff"/><stop offset="1" stop-color="#d8f4ff"/></linearGradient></defs><rect x="0.5" y="0.5" width="15" height="15" fill="url(#fg24)" stroke="#3a70d8"/><rect x="1" y="1" width="14" height="1.8" fill="url(#tb)"/><path d="M10.5 4.2c-1.4-.4-2.3.2-2.6 1.6l-1.4 6.6c-.3 1.4-1.1 1.9-2.3 1.5M6 7.3h3.8" fill="none" stroke="#101828" stroke-width="1.1"/></svg>
<div class="t" style="left:25px;top:482px;font-size:11.5px;letter-spacing:-0.3px">sub_140002560</div>
<svg style="position:absolute;left:3px;top:498px;" width="16" height="16" viewBox="0 0 16 16"><defs><linearGradient id="fg25" x1="0" y1="0" x2="1" y2="1"><stop offset="0" stop-color="#fff"/><stop offset="1" stop-color="#d8f4ff"/></linearGradient></defs><rect x="0.5" y="0.5" width="15" height="15" fill="url(#fg25)" stroke="#3a70d8"/><rect x="1" y="1" width="14" height="1.8" fill="url(#tb)"/><path d="M10.5 4.2c-1.4-.4-2.3.2-2.6 1.6l-1.4 6.6c-.3 1.4-1.1 1.9-2.3 1.5M6 7.3h3.8" fill="none" stroke="#101828" stroke-width="1.1"/></svg>
<div class="t" style="left:25px;top:501px;font-size:11.5px;letter-spacing:-0.3px">sub_1400026D0</div>
<svg style="position:absolute;left:3px;top:517px;" width="16" height="16" viewBox="0 0 16 16"><defs><linearGradient id="fg26" x1="0" y1="0" x2="1" y2="1"><stop offset="0" stop-color="#fff"/><stop offset="1" stop-color="#d8f4ff"/></linearGradient></defs><rect x="0.5" y="0.5" width="15" height="15" fill="url(#fg26)" stroke="#3a70d8"/><rect x="1" y="1" width="14" height="1.8" fill="url(#tb)"/><path d="M10.5 4.2c-1.4-.4-2.3.2-2.6 1.6l-1.4 6.6c-.3 1.4-1.1 1.9-2.3 1.5M6 7.3h3.8" fill="none" stroke="#101828" stroke-width="1.1"/></svg>
<div class="t" style="left:25px;top:520px;font-size:11.5px;letter-spacing:-0.3px">sub_140002750</div>
<svg style="position:absolute;left:3px;top:536px;" width="16" height="16" viewBox="0 0 16 16"><defs><linearGradient id="fg27" x1="0" y1="0" x2="1" y2="1"><stop offset="0" stop-color="#fff"/><stop offset="1" stop-color="#d8f4ff"/></linearGradient></defs><rect x="0.5" y="0.5" width="15" height="15" fill="url(#fg27)" stroke="#3a70d8"/><rect x="1" y="1" width="14" height="1.8" fill="url(#tb)"/><path d="M10.5 4.2c-1.4-.4-2.3.2-2.6 1.6l-1.4 6.6c-.3 1.4-1.1 1.9-2.3 1.5M6 7.3h3.8" fill="none" stroke="#101828" stroke-width="1.1"/></svg>
<div class="t" style="left:25px;top:539px;font-size:11.5px;letter-spacing:-0.3px">sub_1400027E0</div>
<svg style="position:absolute;left:3px;top:555px;" width="16" height="16" viewBox="0 0 16 16"><defs><linearGradient id="fg28" x1="0" y1="0" x2="1" y2="1"><stop offset="0" stop-color="#fff"/><stop offset="1" stop-color="#d8f4ff"/></linearGradient></defs><rect x="0.5" y="0.5" width="15" height="15" fill="url(#fg28)" stroke="#3a70d8"/><rect x="1" y="1" width="14" height="1.8" fill="url(#tb)"/><path d="M10.5 4.2c-1.4-.4-2.3.2-2.6 1.6l-1.4 6.6c-.3 1.4-1.1 1.9-2.3 1.5M6 7.3h3.8" fill="none" stroke="#101828" stroke-width="1.1"/></svg>
<div class="t" style="left:25px;top:558px;font-size:11.5px;letter-spacing:-0.3px">sub_140002870</div>
<svg style="position:absolute;left:3px;top:574px;" width="16" height="16" viewBox="0 0 16 16"><defs><linearGradient id="fg29" x1="0" y1="0" x2="1" y2="1"><stop offset="0" stop-color="#fff"/><stop offset="1" stop-color="#d8f4ff"/></linearGradient></defs><rect x="0.5" y="0.5" width="15" height="15" fill="url(#fg29)" stroke="#3a70d8"/><rect x="1" y="1" width="14" height="1.8" fill="url(#tb)"/><path d="M10.5 4.2c-1.4-.4-2.3.2-2.6 1.6l-1.4 6.6c-.3 1.4-1.1 1.9-2.3 1.5M6 7.3h3.8" fill="none" stroke="#101828" stroke-width="1.1"/></svg>
<div class="t" style="left:25px;top:577px;font-size:11.5px;letter-spacing:-0.3px">sub_140002940</div>
<svg style="position:absolute;left:3px;top:593px;" width="16" height="16" viewBox="0 0 16 16"><defs><linearGradient id="fg30" x1="0" y1="0" x2="1" y2="1"><stop offset="0" stop-color="#fff"/><stop offset="1" stop-color="#d8f4ff"/></linearGradient></defs><rect x="0.5" y="0.5" width="15" height="15" fill="url(#fg30)" stroke="#3a70d8"/><rect x="1" y="1" width="14" height="1.8" fill="url(#tb)"/><path d="M10.5 4.2c-1.4-.4-2.3.2-2.6 1.6l-1.4 6.6c-.3 1.4-1.1 1.9-2.3 1.5M6 7.3h3.8" fill="none" stroke="#101828" stroke-width="1.1"/></svg>
<div class="t" style="left:25px;top:596px;font-size:11.5px;letter-spacing:-0.3px">sub_140002A10</div>
<svg style="position:absolute;left:3px;top:612px;" width="16" height="16" viewBox="0 0 16 16"><defs><linearGradient id="fg31" x1="0" y1="0" x2="1" y2="1"><stop offset="0" stop-color="#fff"/><stop offset="1" stop-color="#d8f4ff"/></linearGradient></defs><rect x="0.5" y="0.5" width="15" height="15" fill="url(#fg31)" stroke="#3a70d8"/><rect x="1" y="1" width="14" height="1.8" fill="url(#tb)"/><path d="M10.5 4.2c-1.4-.4-2.3.2-2.6 1.6l-1.4 6.6c-.3 1.4-1.1 1.9-2.3 1.5M6 7.3h3.8" fill="none" stroke="#101828" stroke-width="1.1"/></svg>
<div class="t" style="left:25px;top:615px;font-size:11.5px;letter-spacing:-0.3px">sub_140002A80</div>
<svg style="position:absolute;left:3px;top:631px;" width="16" height="16" viewBox="0 0 16 16"><defs><linearGradient id="fg32" x1="0" y1="0" x2="1" y2="1"><stop offset="0" stop-color="#fff"/><stop offset="1" stop-color="#d8f4ff"/></linearGradient></defs><rect x="0.5" y="0.5" width="15" height="15" fill="url(#fg32)" stroke="#3a70d8"/><rect x="1" y="1" width="14" height="1.8" fill="url(#tb)"/><path d="M10.5 4.2c-1.4-.4-2.3.2-2.6 1.6l-1.4 6.6c-.3 1.4-1.1 1.9-2.3 1.5M6 7.3h3.8" fill="none" stroke="#101828" stroke-width="1.1"/></svg>
<div class="t" style="left:25px;top:634px;font-size:11.5px;letter-spacing:-0.3px">sub_140002C10</div>
<svg style="position:absolute;left:3px;top:650px;" width="16" height="16" viewBox="0 0 16 16"><defs><linearGradient id="fg33" x1="0" y1="0" x2="1" y2="1"><stop offset="0" stop-color="#fff"/><stop offset="1" stop-color="#d8f4ff"/></linearGradient></defs><rect x="0.5" y="0.5" width="15" height="15" fill="url(#fg33)" stroke="#3a70d8"/><rect x="1" y="1" width="14" height="1.8" fill="url(#tb)"/><path d="M10.5 4.2c-1.4-.4-2.3.2-2.6 1.6l-1.4 6.6c-.3 1.4-1.1 1.9-2.3 1.5M6 7.3h3.8" fill="none" stroke="#101828" stroke-width="1.1"/></svg>
<div class="t" style="left:25px;top:653px;font-size:11.5px;letter-spacing:-0.3px">sub_140002DD0</div>
<svg style="position:absolute;left:3px;top:669px;" width="16" height="16" viewBox="0 0 16 16"><defs><linearGradient id="fg34" x1="0" y1="0" x2="1" y2="1"><stop offset="0" stop-color="#fff"/><stop offset="1" stop-color="#d8f4ff"/></linearGradient></defs><rect x="0.5" y="0.5" width="15" height="15" fill="url(#fg34)" stroke="#3a70d8"/><rect x="1" y="1" width="14" height="1.8" fill="url(#tb)"/><path d="M10.5 4.2c-1.4-.4-2.3.2-2.6 1.6l-1.4 6.6c-.3 1.4-1.1 1.9-2.3 1.5M6 7.3h3.8" fill="none" stroke="#101828" stroke-width="1.1"/></svg>
<div class="t" style="left:25px;top:672px;font-size:11.5px;letter-spacing:-0.3px">sub_140002E60</div>
<svg style="position:absolute;left:3px;top:688px;" width="16" height="16" viewBox="0 0 16 16"><defs><linearGradient id="fg35" x1="0" y1="0" x2="1" y2="1"><stop offset="0" stop-color="#fff"/><stop offset="1" stop-color="#d8f4ff"/></linearGradient></defs><rect x="0.5" y="0.5" width="15" height="15" fill="url(#fg35)" stroke="#3a70d8"/><rect x="1" y="1" width="14" height="1.8" fill="url(#tb)"/><path d="M10.5 4.2c-1.4-.4-2.3.2-2.6 1.6l-1.4 6.6c-.3 1.4-1.1 1.9-2.3 1.5M6 7.3h3.8" fill="none" stroke="#101828" stroke-width="1.1"/></svg>
<div class="t" style="left:25px;top:691px;font-size:11.5px;letter-spacing:-0.3px">sub_140002F00</div>
<svg style="position:absolute;left:3px;top:707px;" width="16" height="16" viewBox="0 0 16 16"><defs><linearGradient id="fg36" x1="0" y1="0" x2="1" y2="1"><stop offset="0" stop-color="#fff"/><stop offset="1" stop-color="#d8f4ff"/></linearGradient></defs><rect x="0.5" y="0.5" width="15" height="15" fill="url(#fg36)" stroke="#3a70d8"/><rect x="1" y="1" width="14" height="1.8" fill="url(#tb)"/><path d="M10.5 4.2c-1.4-.4-2.3.2-2.6 1.6l-1.4 6.6c-.3 1.4-1.1 1.9-2.3 1.5M6 7.3h3.8" fill="none" stroke="#101828" stroke-width="1.1"/></svg>
<div class="t" style="left:25px;top:710px;font-size:11.5px;letter-spacing:-0.3px">sub_140003050</div>
<svg style="position:absolute;left:3px;top:726px;" width="16" height="16" viewBox="0 0 16 16"><defs><linearGradient id="fg37" x1="0" y1="0" x2="1" y2="1"><stop offset="0" stop-color="#fff"/><stop offset="1" stop-color="#d8f4ff"/></linearGradient></defs><rect x="0.5" y="0.5" width="15" height="15" fill="url(#fg37)" stroke="#3a70d8"/><rect x="1" y="1" width="14" height="1.8" fill="url(#tb)"/><path d="M10.5 4.2c-1.4-.4-2.3.2-2.6 1.6l-1.4 6.6c-.3 1.4-1.1 1.9-2.3 1.5M6 7.3h3.8" fill="none" stroke="#101828" stroke-width="1.1"/></svg>
<div class="t" style="left:25px;top:729px;font-size:11.5px;letter-spacing:-0.3px">sub_1400031B0</div>
<svg style="position:absolute;left:3px;top:745px;" width="16" height="16" viewBox="0 0 16 16"><defs><linearGradient id="fg38" x1="0" y1="0" x2="1" y2="1"><stop offset="0" stop-color="#fff"/><stop offset="1" stop-color="#d8f4ff"/></linearGradient></defs><rect x="0.5" y="0.5" width="15" height="15" fill="url(#fg38)" stroke="#3a70d8"/><rect x="1" y="1" width="14" height="1.8" fill="url(#tb)"/><path d="M10.5 4.2c-1.4-.4-2.3.2-2.6 1.6l-1.4 6.6c-.3 1.4-1.1 1.9-2.3 1.5M6 7.3h3.8" fill="none" stroke="#101828" stroke-width="1.1"/></svg>
<div class="t" style="left:25px;top:748px;font-size:11.5px;letter-spacing:-0.3px">sub_1400032A0</div>
</div>
<div style="left:366px;top:148px;width:16px;height:757px;background:#f0f0f0"></div>
<svg style="position:absolute;left:366px;top:150px;" width="16" height="14" viewBox="0 0 16 14"><path d="M4.6 10L8 6.4 11.4 10" fill="none" stroke="#505050" stroke-width="2.1"/></svg>
<div style="left:366px;top:165px;width:15px;height:18px;background:#cdcdcd"></div>
<svg style="position:absolute;left:366px;top:890px;" width="16" height="14" viewBox="0 0 16 14"><path d="M4.6 4L8 7.6 11.4 4" fill="none" stroke="#505050" stroke-width="2.1"/></svg>
<div style="left:1px;top:905px;width:381px;height:17px;background:#f0f0f0"></div>
<svg style="position:absolute;left:2px;top:905px;" width="14" height="17" viewBox="0 0 14 17"><path d="M9 5L5.4 8.5 9 12" fill="none" stroke="#505050" stroke-width="2.1"/></svg>
<div style="left:18px;top:906px;width:105px;height:15px;background:#cdcdcd"></div>
<svg style="position:absolute;left:349px;top:905px;" width="14" height="17" viewBox="0 0 14 17"><path d="M5 5L8.6 8.5 5 12" fill="none" stroke="#505050" stroke-width="2.1"/></svg>
<div class="t" style="left:6px;top:927px;">Line 65563 of 71756</div>
<div style="left:387px;top:142px;width:1533px;height:1px;background:#a0a0a0"></div>
<div style="left:389px;top:121px;width:188px;height:21px;background:#f0f0f0;border:1px solid #d9d9d9;border-bottom:none"></div>
<svg style="position:absolute;left:400px;top:123px;" width="17" height="17" viewBox="0 0 17 17"><rect x="0.5" y="0.5" width="11" height="12" fill="#e8f8ff" stroke="#2a78e0"/><rect x="0.5" y="0.5" width="11" height="2.2" fill="url(#tb)"/><rect x="4.5" y="3.5" width="11" height="13" fill="#f4f8ff" stroke="#10408a"/><path d="M6.2 6h3M8.5 8.2h5M8.5 10.4h5M6.2 12.6h3M8.5 14.6h5" stroke="#304060" stroke-width="1"/></svg>
<div class="t" style="left:443px;top:127px;"><span style="display:inline-block;width:80px;text-align:center">IDA View-A</span></div>
<svg style="position:absolute;left:549px;top:125px;" width="15" height="15" viewBox="0 0 15 15"><rect x="0.5" y="0.5" width="14" height="14" rx="2.5" fill="#c8c8c8" stroke="#a8a8a8"/><path d="M4 4l7 7M11 4l-7 7" stroke="#fff" stroke-width="2"/></svg>
<div style="left:577px;top:119px;width:194px;height:24px;background:#fff;border:1px solid #d9d9d9;border-bottom:none"></div>
<svg style="position:absolute;left:591px;top:122px;" width="17" height="17" viewBox="0 0 17 17"><rect x="0.5" y="0.5" width="11" height="12" fill="#e8f8ff" stroke="#2a78e0"/><rect x="0.5" y="0.5" width="11" height="2.2" fill="url(#tb)"/><rect x="4.5" y="3.5" width="11" height="13" fill="#f4f8ff" stroke="#10408a"/><path d="M6.2 6h3M8.5 8.2h5M8.5 10.4h5M6.2 12.6h3M8.5 14.6h5" stroke="#304060" stroke-width="1"/></svg>
<div class="t" style="left:634px;top:126px;"><span style="display:inline-block;width:80px;text-align:center">Pseudocode-A</span></div>
<svg style="position:absolute;left:742px;top:124px;" width="15" height="15" viewBox="0 0 15 15"><rect x="0.5" y="0.5" width="14" height="14" rx="2.5" fill="#e05438" stroke="#c04020"/><path d="M4 4l7 7M11 4l-7 7" stroke="#fff" stroke-width="2"/></svg>
<div style="left:771px;top:121px;width:192px;height:21px;background:#f0f0f0;border:1px solid #d9d9d9;border-bottom:none"></div>
<svg style="position:absolute;left:782px;top:123px;" width="17" height="17" viewBox="0 0 17 17"><rect x="0.5" y="0.5" width="15" height="15" fill="#fff" stroke="#3070d0"/><rect x="0.5" y="0.5" width="15" height="2" fill="#3a80e0"/><path d="M8 4.5l4.3 2.5v5L8 14.5 3.7 12V7z" fill="none" stroke="#2050c0" stroke-width="1.1"/></svg>
<div class="t" style="left:827px;top:127px;"><span style="display:inline-block;width:80px;text-align:center">Hex View-1</span></div>
<svg style="position:absolute;left:935px;top:125px;" width="15" height="15" viewBox="0 0 15 15"><rect x="0.5" y="0.5" width="14" height="14" rx="2.5" fill="#c8c8c8" stroke="#a8a8a8"/><path d="M4 4l7 7M11 4l-7 7" stroke="#fff" stroke-width="2"/></svg>
<div style="left:963px;top:121px;width:191px;height:21px;background:#f0f0f0;border:1px solid #d9d9d9;border-bottom:none;border-left:none"></div>
<svg style="position:absolute;left:974px;top:123px;" width="17" height="17" viewBox="0 0 17 17"><rect x="0.5" y="0.5" width="15" height="15" fill="#fff" stroke="#3070d0"/><rect x="0.5" y="0.5" width="15" height="2" fill="#3a80e0"/><text x="3.5" y="13" font-size="10" font-family="Liberation Sans" fill="#2050c0">A</text><path d="M4 13.5h8" stroke="#2050c0"/></svg>
<div class="t" style="left:1018px;top:127px;"><span style="display:inline-block;width:80px;text-align:center">Structures</span></div>
<svg style="position:absolute;left:1126px;top:125px;" width="15" height="15" viewBox="0 0 15 15"><rect x="0.5" y="0.5" width="14" height="14" rx="2.5" fill="#c8c8c8" stroke="#a8a8a8"/><path d="M4 4l7 7M11 4l-7 7" stroke="#fff" stroke-width="2"/></svg>
<div style="left:1154px;top:121px;width:191px;height:21px;background:#f0f0f0;border:1px solid #d9d9d9;border-bottom:none;border-left:none"></div>
<svg style="position:absolute;left:1165px;top:123px;" width="17" height="17" viewBox="0 0 17 17"><rect x="0.5" y="0.5" width="15" height="15" fill="#fff" stroke="#3070d0"/><rect x="0.5" y="0.5" width="15" height="2" fill="#3a80e0"/><path d="M3.5 5h2M3.5 8h2M3.5 11h2M3.5 14h2M7 5h5M7 8h5M7 11h5M7 14h5" stroke="#2050a0" stroke-width="1.1"/></svg>
<div class="t" style="left:1209px;top:127px;"><span style="display:inline-block;width:80px;text-align:center">Enums</span></div>
<svg style="position:absolute;left:1317px;top:125px;" width="15" height="15" viewBox="0 0 15 15"><rect x="0.5" y="0.5" width="14" height="14" rx="2.5" fill="#c8c8c8" stroke="#a8a8a8"/><path d="M4 4l7 7M11 4l-7 7" stroke="#fff" stroke-width="2"/></svg>
<div style="left:1345px;top:121px;width:192px;height:21px;background:#f0f0f0;border:1px solid #d9d9d9;border-bottom:none;border-left:none"></div>
<svg style="position:absolute;left:1356px;top:123px;" width="17" height="17" viewBox="0 0 17 17"><rect x="0.5" y="1.5" width="15" height="14" fill="#fff" stroke="#3070d0"/><rect x="0.5" y="1.5" width="15" height="2" fill="#3a80e0"/><path d="M2 6h4M2 9h4M2 12h4M9 7h5M9 10h5M9 13h5" stroke="#3050a0"/><path d="M3 4l4 3-4 3z" fill="#10a010"/></svg>
<div class="t" style="left:1401px;top:127px;"><span style="display:inline-block;width:80px;text-align:center">Imports</span></div>
<svg style="position:absolute;left:1509px;top:125px;" width="15" height="15" viewBox="0 0 15 15"><rect x="0.5" y="0.5" width="14" height="14" rx="2.5" fill="#c8c8c8" stroke="#a8a8a8"/><path d="M4 4l7 7M11 4l-7 7" stroke="#fff" stroke-width="2"/></svg>
<div style="left:1537px;top:121px;width:189px;height:21px;background:#f0f0f0;border:1px solid #d9d9d9;border-bottom:none;border-left:none"></div>
<svg style="position:absolute;left:1548px;top:123px;" width="17" height="17" viewBox="0 0 17 17"><rect x="0.5" y="1.5" width="15" height="14" fill="#fff" stroke="#3070d0"/><rect x="0.5" y="1.5" width="15" height="2" fill="#3a80e0"/><path d="M3 7h6M3 10h6M3 13h6" stroke="#3050a0"/><path d="M10 8l4-4M11 4h3v3" stroke="#10a010" stroke-width="1.3" fill="none"/></svg>
<div class="t" style="left:1591px;top:127px;"><span style="display:inline-block;width:80px;text-align:center">Exports</span></div>
<svg style="position:absolute;left:1698px;top:125px;" width="15" height="15" viewBox="0 0 15 15"><rect x="0.5" y="0.5" width="14" height="14" rx="2.5" fill="#c8c8c8" stroke="#a8a8a8"/><path d="M4 4l7 7M11 4l-7 7" stroke="#fff" stroke-width="2"/></svg>
<div style="left:387px;top:143px;width:44px;height:800px;background:#fff"></div>
<div style="left:431px;top:143px;width:4px;height:800px;background:#f0f0f0"></div>
<div style="left:435px;top:143px;width:1485px;height:800px;border:1px solid #0078d7;background:#fff"></div>
<div style="left:436px;top:369px;width:1466px;height:15px;background:#e4e4e4"></div>
<svg style="position:absolute;left:387px;top:143px;" width="44" height="780" viewBox="0 0 44 780"><circle cx="10.5" cy="8.5" r="4.5" fill="#5ac8fa"/><circle cx="10.5" cy="23.5" r="4.5" fill="#5ac8fa"/><circle cx="10.5" cy="38.5" r="4.5" fill="#5ac8fa"/><circle cx="10.5" cy="68.5" r="4.5" fill="#5ac8fa"/><circle cx="10.5" cy="83.5" r="4.5" fill="#5ac8fa"/><circle cx="10.5" cy="98.5" r="4.5" fill="#5ac8fa"/><circle cx="10.5" cy="113.5" r="4.5" fill="#5ac8fa"/><circle cx="10.5" cy="128.5" r="4.5" fill="#5ac8fa"/><circle cx="10.5" cy="143.5" r="4.5" fill="#5ac8fa"/><circle cx="10.5" cy="158.5" r="4.5" fill="#5ac8fa"/><circle cx="10.5" cy="173.5" r="4.5" fill="#5ac8fa"/><circle cx="10.5" cy="188.5" r="4.5" fill="#5ac8fa"/><circle cx="10.5" cy="203.5" r="4.5" fill="#5ac8fa"/><circle cx="10.5" cy="218.5" r="4.5" fill="#5ac8fa"/><circle cx="10.5" cy="233.5" r="4.5" fill="#5ac8fa"/><circle cx="10.5" cy="248.5" r="4.5" fill="#5ac8fa"/><circle cx="10.5" cy="263.5" r="4.5" fill="#5ac8fa"/><circle cx="10.5" cy="278.5" r="4.5" fill="#5ac8fa"/><circle cx="10.5" cy="308.5" r="4.5" fill="#5ac8fa"/><circle cx="10.5" cy="323.5" r="4.5" fill="#5ac8fa"/><circle cx="10.5" cy="338.5" r="4.5" fill="#5ac8fa"/><circle cx="10.5" cy="368.5" r="4.5" fill="#5ac8fa"/><circle cx="10.5" cy="383.5" r="4.5" fill="#5ac8fa"/><circle cx="10.5" cy="428.5" r="4.5" fill="#5ac8fa"/><circle cx="10.5" cy="443.5" r="4.5" fill="#5ac8fa"/><circle cx="10.5" cy="458.5" r="4.5" fill="#5ac8fa"/><circle cx="10.5" cy="473.5" r="4.5" fill="#5ac8fa"/><circle cx="10.5" cy="488.5" r="4.5" fill="#5ac8fa"/><circle cx="10.5" cy="503.5" r="4.5" fill="#5ac8fa"/><circle cx="10.5" cy="518.5" r="4.5" fill="#5ac8fa"/><circle cx="10.5" cy="533.5" r="4.5" fill="#5ac8fa"/><circle cx="10.5" cy="563.5" r="4.5" fill="#5ac8fa"/><circle cx="10.5" cy="593.5" r="4.5" fill="#5ac8fa"/><circle cx="10.5" cy="608.5" r="4.5" fill="#5ac8fa"/><circle cx="10.5" cy="653.5" r="4.5" fill="#5ac8fa"/><circle cx="10.5" cy="668.5" r="4.5" fill="#5ac8fa"/><circle cx="10.5" cy="683.5" r="4.5" fill="#5ac8fa"/><circle cx="10.5" cy="713.5" r="4.5" fill="#5ac8fa"/><circle cx="10.5" cy="743.5" r="4.5" fill="#5ac8fa"/></svg>
<div class="m" style="left:405px;top:146px;width:24px;color:#808080;text-align:right">363
364
365
366
367
368
369
370
371
372
373
374
375
376
377
378
379
380
381
382
383
384
385
386
387
388
389
390
391
392
393
394
395
396
397
398
399
400
401
402
403
404
405
406
407
408
409
410
411
412
413</div>
<div class="m n" style="left:436px;top:146px;width:1465px;height:776px;overflow:hidden">    <span class="b">sub_140DB59A0</span>(&amp;<span class="b">qword_141D86F10</span>, <span class="v">v51</span>);
    <span class="b">sub_140DB62A0</span>(&amp;<span class="v">lpText</span>);
    <span class="b">sub_140DB62A0</span>(&amp;<span class="v">v134</span>);
  }
  <span class="b">sub_140DAEEC0</span>();
  <span class="v">v52</span> = <span class="b">sub_140DB5F60</span>(&amp;<span class="v">v136</span>, <span class="s">&quot;log:/&quot;</span>, &amp;<span class="b">qword_141D86F10</span>);
  <span class="v">v53</span> = (<span class="g">_QWORD *</span>)<span class="b">sub_140DB5F00</span>(&amp;<span class="v">v134</span>, <span class="v">v52</span>, <span class="s">&quot;.log&quot;</span>);
  <span class="v">v54</span> = (<span class="g">_QWORD *</span>)<span class="b">sub_140DDB460</span>(&amp;<span class="v">lpText</span>, *<span class="v">v53</span>);
  <span class="b">sub_140DD8510</span>(*<span class="v">v54</span>);
  <span class="b">sub_140DB62A0</span>(&amp;<span class="v">lpText</span>);
  <span class="b">sub_140DB62A0</span>(&amp;<span class="v">v134</span>);
  <span class="b">sub_140DB62A0</span>(&amp;<span class="v">v136</span>);
  <span class="b">sub_140DEC980</span>(<span class="v">v123</span>, <span class="s">&quot;SteamTenfoot&quot;</span>);
  <span class="v">v55</span> = <span class="b">sub_140DB5B00</span>(<span class="v">v123</span>, <span class="s">&quot;1&quot;</span>) != 0;
  if ( !(<span class="g">unsigned int</span>)<span class="b">sub_14005AB80</span>() )
    <span class="b">sub_140DAF470</span>(<span class="s">&quot;Executable signature verification failed.\n&quot;</span>);
  <span class="b">sub_140DCAEE0</span>();
  <span class="b">sub_140DD5550</span>();
  if ( (<span class="g">int</span>)<span class="b">qword_141DCB478</span> &lt;= 0 || <span class="b">SHIDWORD</span>(<span class="b">qword_141DCB478</span>) &lt;= 0 )
  {
    <span class="b">sub_140DD5450</span>(&amp;<span class="v">lpText</span>);
    <span class="b">qword_141DCB478</span> = (<span class="g">__int64</span>)<span class="v">lpText</span>;
    if ( (<span class="g">int</span>)<span class="v">lpText</span> &lt;= 0 || <span class="b">SHIDWORD</span>(<span class="v">lpText</span>) &lt;= 0 )
    {
      <span class="b">qword_141DCB478</span> = 0x30000000400i64;
      <span class="b">dword_141CC715C</span> = 0;
    }
  }
  if ( !<span class="b">dword_141EEDBD0</span> )
    <span class="p">SetThreadExecutionState</span>(0x80000002);
  <span class="v">v56</span> = <span class="b">sub_140DE6060</span>(&amp;<span class="v">v134</span>, <span class="s">&quot;temp:/&quot;</span>);
  <span class="v">v57</span> = <span class="b">sub_140DB5F00</span>(&amp;<span class="v">lpText</span>, <span class="v">v56</span>, <span class="s">&quot;run.txt&quot;</span>);
  <span class="b">sub_140DB59A0</span>(&amp;<span class="b">qword_141D86F20</span>, <span class="v">v57</span>);
  <span class="b">sub_140DB62A0</span>(&amp;<span class="v">lpText</span>);
  <span class="b">sub_140DB62A0</span>(&amp;<span class="v">v134</span>);
  if ( <span class="b">dword_141D86E24</span> || (<span class="g">unsigned int</span>)<span class="b">sub_140DE57C0</span>(<span class="b">qword_141D86F20</span>) )
  {
    if ( (<span class="g">unsigned int</span>)<span class="b">sub_140DE57C0</span>(<span class="s">&quot;log:/SingleStep.rpt&quot;</span>) )
    {
      <span class="v">v58</span> = <span class="b">sub_140DE02D0</span>(<span class="s">&quot;ETRSSystemCompatibility.DoYouWishToContinue=Do you wish to continue anyway?&quot;</span>);
      <span class="v">v59</span> = <span class="b">sub_140DE02D0</span>(
              <span class="s">&quot;ETRSLauncher.ZoneAlarmProblem=It is very likely that the game crashed on the last run due to a known issue&quot;</span>
              <span class="s">&quot; caused by ZoneAlarm or similar software. You need to uninstall that software before continuing.&quot;</span>);
      <span class="b">LODWORD</span>(<span class="v">v107</span>) = -1412628471;
      <span class="b">sub_140DB8620</span>(&amp;<span class="v">lpText</span>, <span class="s">&quot;%1\n%2&quot;</span>, 2882338825i64, <span class="v">v59</span>, <span class="o">v107</span>, <span class="v">v58</span>);
      if ( <span class="v">v55</span> )
      {
        <span class="b">sub_140DB0380</span>(<span class="s">&quot;%1\n&quot;</span>, 2882338825i64, <span class="v">lpText</span>);
      }
      else if ( (<span class="g">unsigned int</span>)<span class="b">sub_140DEC9C0</span>(<span class="v">lpText</span>) == 32 )
      {</div>
<div style="left:561px;top:370px;width:2px;height:13px;background:#000"></div>
<div style="left:1903px;top:144px;width:16px;height:798px;background:#f0f0f0"></div>
<svg style="position:absolute;left:1902px;top:145px;" width="17" height="14" viewBox="0 0 17 14"><path d="M4.8 10L8.5 6.4 12.2 10" fill="none" stroke="#505050" stroke-width="2.1"/></svg>
<div style="left:1903px;top:518px;width:15px;height:50px;background:#cdcdcd"></div>
<svg style="position:absolute;left:1902px;top:928px;" width="17" height="14" viewBox="0 0 17 14"><path d="M4.8 4L8.5 7.6 12.2 4" fill="none" stroke="#505050" stroke-width="2.1"/></svg>
<div style="left:436px;top:922px;width:1466px;height:20px;background:#f0f0f0"></div>
<div class="m" style="left:438px;top:927px;color:#000">0004E2F5 sub_14004E380:378 (14004EEF5)</div>
<div style="left:495px;top:924px;width:1px;height:16px;background:#d8d8d8"></div>
<div style="left:704px;top:924px;width:1px;height:16px;background:#d8d8d8"></div>
<div style="left:717px;top:924px;width:1px;height:16px;background:#d8d8d8"></div>
<div style="left:0px;top:947px;width:1920px;height:26px;background:#f0f0f0;border:1px solid #a0a0a0"></div>
<svg style="position:absolute;left:4px;top:952px;" width="15" height="16" viewBox="0 0 15 16"><rect x="0.5" y="0.5" width="13" height="15" fill="#f4f8ff" stroke="#3070c0"/><rect x="0.5" y="0.5" width="13" height="2" fill="#3a80e0"/><path d="M3 5h8M3 7.5h8M3 10h8M3 12.5h8" stroke="#506080" stroke-width=".9"/></svg>
<div class="t" style="left:25px;top:955px;">Output</div>
<svg style="position:absolute;left:1848px;top:954px;" width="14" height="14" viewBox="0 0 14 14"><rect x="2.5" y="3.5" width="9" height="8" fill="none" stroke="#000"/><rect x="2.5" y="3.5" width="9" height="1.5" fill="#000"/></svg>
<svg style="position:absolute;left:1874px;top:954px;" width="14" height="14" viewBox="0 0 14 14"><rect x="3.5" y="6.5" width="5" height="5" fill="none" stroke="#000"/><rect x="3.5" y="6.5" width="5" height="1.2" fill="#000"/><path d="M5.5 6.5v-3h6v5h-3" fill="none" stroke="#000"/><rect x="5.5" y="3.5" width="6" height="1.2" fill="#000"/></svg>
<svg style="position:absolute;left:1900px;top:954px;" width="14" height="14" viewBox="0 0 14 14"><path d="M3 3.5L11 11.5M11 3.5L3 11.5" stroke="#000" stroke-width="1.4"/></svg>
<div style="left:0px;top:975px;width:1920px;height:19px;background:#fff;border:1px solid #a0a0a0;overflow:hidden"></div>
<div class="m" style="left:7px;top:976px;color:#000;width:1890px;height:4px;overflow:hidden"><div style="position:relative;top:-11px">14004E380: using guessed type char var_E0[8];</div></div>
<div class="m" style="left:7px;top:980px;color:#000">14004E380: using guessed type char var_E0[8];</div>
<div style="left:1902px;top:977px;width:16px;height:16px;background:#f0f0f0"></div>
<svg style="position:absolute;left:1902px;top:977px;" width="16" height="16" viewBox="0 0 16 16"><path d="M5 7.5L8 4.5 11 7.5M5 11.5L8 14.5 11 11.5" fill="none" stroke="#606060" stroke-width="2"/></svg>
<div style="left:2px;top:996px;width:45px;height:22px;background:#e1e1e1;border:1px solid #adadad"></div>
<div class="t" style="left:7px;top:1001px;">Python</div>
<div style="left:52px;top:995px;width:1867px;height:24px;background:#fff;border:1px solid #7a7a7a"></div>
<div class="m" style="left:2px;top:1025px;color:#000">AU:  idle</div>
<div class="m" style="left:85px;top:1025px;color:#000">Down</div>
<div class="m" style="left:161px;top:1025px;color:#000">Disk: 1325GB</div>
<div style="left:80px;top:1022px;width:1px;height:17px;background:#d8d8d8"></div>
<div style="left:156px;top:1022px;width:1px;height:17px;background:#d8d8d8"></div>
<div style="left:246px;top:1022px;width:1px;height:17px;background:#d8d8d8"></div>
<div style="left:0px;top:1040px;width:1920px;height:40px;background:linear-gradient(90deg,#1e1e1e 0px,#262626 400px,#333 800px,#3a3a3a 1100px,#464646 1450px,#444 1650px,#303030 1820px,#262626 1920px)"></div>
<div style="left:0px;top:1040px;width:48px;height:40px;background:#1a1a1a"></div>
<svg style="position:absolute;left:16px;top:1052px;" width="17" height="17" viewBox="0 0 17 17"><path d="M0 2.3L6.8 1.4V7.7H0zM7.7 1.3L17 0V7.7H7.7zM0 8.6H6.8V15L0 14.1zM7.7 8.6H17V17L7.7 15.7z" fill="#fff"/></svg>
<div style="left:48px;top:1040px;width:343px;height:40px;background:#f0f0f0"></div>
<svg style="position:absolute;left:59px;top:1051px;" width="18" height="18" viewBox="0 0 18 18"><circle cx="11" cy="7" r="5.3" fill="none" stroke="#222" stroke-width="1.3"/><path d="M7.2 10.8L1 17" stroke="#222" stroke-width="1.5"/></svg>
<div class="t" style="left:88px;top:1053px;font-size:14.6px;line-height:17px;color:#1e1e1e">Scrivi qui per eseguire la ricerca</div>
<svg style="position:absolute;left:327px;top:1045px;" width="50" height="32" viewBox="0 0 50 32"><path d="M1 23c4-8 8-13 13-13 4 0 7 5 9 13z" fill="#7ed07a"/><path d="M8 2l1.5 3.5L13 7l-3.5 1.5L8 12 6.5 8.5 3 7l3.5-1.5z" fill="#f8c820"/><rect x="20" y="7" width="23" height="20" rx="3" fill="#e8ecf0"/><rect x="20" y="7" width="23" height="6" rx="2" fill="#3a7be0"/><path d="M26 4v5M37 4v5" stroke="#3a7be0" stroke-width="1.5"/><path d="M42 34c-6-6-7-9-7-11a7 7 0 0 1 14 0c0 2-1 5-7 11z" fill="#f06820"/><circle cx="42" cy="23" r="2.5" fill="#fff"/></svg>
<div style="left:1276px;top:1040px;width:49px;height:40px;background:#666"></div>
<svg style="position:absolute;left:405px;top:1046px" width="26" height="26" viewBox="0 0 24 24"><rect x="2" y="5" width="20" height="15" fill="#000" stroke="#888" stroke-width="1"/><text x="4" y="11" font-size="5" fill="#ddd" font-family="Liberation Mono">C:\</text><path d="M12 14h6" stroke="#ddd"/></svg>
<svg style="position:absolute;left:454.5px;top:1046px" width="26" height="26" viewBox="0 0 24 24"><circle cx="12" cy="12" r="10" fill="#db4437"/><path d="M12 12L3.3 7A10 10 0 0 1 20.7 7z" fill="#db4437"/><path d="M12 12L20.7 7A10 10 0 0 1 12 22z" fill="#f4c20d"/><path d="M12 12L12 22A10 10 0 0 1 3.3 7z" fill="#0f9d58"/><circle cx="12" cy="12" r="4.8" fill="#fff"/><circle cx="12" cy="12" r="3.8" fill="#4285f4"/></svg>
<svg style="position:absolute;left:504px;top:1046px" width="26" height="26" viewBox="0 0 24 24"><rect x="2" y="9" width="12" height="12" rx="2" fill="none" stroke="#f29a1b" stroke-width="3"/><rect x="10" y="3" width="12" height="12" rx="2" fill="none" stroke="#1aa1e1" stroke-width="3"/></svg>
<svg style="position:absolute;left:553px;top:1046px" width="26" height="26" viewBox="0 0 24 24"><rect x="2" y="2" width="20" height="20" fill="#bf0000"/><text x="4" y="18" font-size="15" font-weight="bold" font-style="italic" fill="#fff" font-family="Liberation Sans">Fz</text></svg>
<svg style="position:absolute;left:601.5px;top:1046px" width="26" height="26" viewBox="0 0 24 24"><rect x="5" y="3" width="17" height="19" fill="#e8eef8" stroke="#99a"/><rect x="1" y="6" width="14" height="13" fill="#2b5cb8"/><text x="2.5" y="16.5" font-size="10" font-weight="bold" fill="#fff" font-family="Liberation Sans">W</text></svg>
<svg style="position:absolute;left:651px;top:1046px" width="26" height="26" viewBox="0 0 24 24"><rect x="2" y="5" width="21" height="14" fill="#6ec0f0"/><circle cx="8" cy="11" r="3.5" fill="#fff"/><path d="M14 8h7M14 11h7M14 14h7" stroke="#fff"/></svg>
<svg style="position:absolute;left:700px;top:1046px" width="26" height="26" viewBox="0 0 24 24"><rect x="2" y="2" width="20" height="21" fill="#2a5aa8" stroke="#9bc" stroke-width=".6"/><text x="3" y="8" font-size="3.5" fill="#fff" font-family="Liberation Sans">DYNAMIC RANGE</text><text x="3" y="20" font-size="11" font-weight="bold" fill="#fff" font-family="Liberation Sans">DR</text></svg>
<svg style="position:absolute;left:749px;top:1046px" width="26" height="26" viewBox="0 0 24 24"><circle cx="12" cy="12" r="6" fill="none" stroke="#fff" stroke-width="3"/><path d="M12 2v4M12 18v4M2 12h4M18 12h4M5 5l3 3M16 16l3 3M5 19l3-3M16 8l3-3" stroke="#fff" stroke-width="3"/></svg>
<svg style="position:absolute;left:798px;top:1046px" width="26" height="26" viewBox="0 0 24 24"><path d="M17 2l5 2.5v15L17 22 7 13l-4 3-2-1V9l2-1 4 3z" fill="#8c5fd0"/><path d="M17 7v10l-6-5z" fill="#333"/></svg>
<svg style="position:absolute;left:845px;top:1046px" width="26" height="26" viewBox="0 0 24 24"><path d="M4 18L14 2l8 4-8 16z" fill="#9fd8e8" stroke="#6ab" stroke-width=".8"/><path d="M3 21l4-4h10l-3 4z" fill="#c8eef8"/></svg>
<svg style="position:absolute;left:895.5px;top:1046px" width="26" height="26" viewBox="0 0 24 24"><rect x="2" y="4" width="20" height="16" rx="2" fill="#f8d070"/><circle cx="12" cy="14" r="6.5" fill="#f8c040" stroke="#d09020"/><path d="M12 10v4h3" stroke="#a06010" fill="none"/></svg>
<svg style="position:absolute;left:945px;top:1046px" width="26" height="26" viewBox="0 0 24 24"><circle cx="12" cy="13" r="9.5" fill="#ff7a18"/><circle cx="13" cy="13" r="5.5" fill="#6a3bd0"/><path d="M4 8c2-5 7-7 11-6-2 1-3 2-3 3" fill="#ffcc30"/></svg>
<svg style="position:absolute;left:993.5px;top:1046px" width="26" height="26" viewBox="0 0 24 24"><path d="M2 5h8l2 2h10v14H2z" fill="#f8c440"/><rect x="2" y="9" width="20" height="12" fill="#ffd85a"/><rect x="8" y="15" width="8" height="6" fill="#2a8ae0"/></svg>
<svg style="position:absolute;left:1043px;top:1046px" width="26" height="26" viewBox="0 0 24 24"><circle cx="12" cy="12" r="10.5" fill="#3b82d8" stroke="#9cc8f0" stroke-width=".8"/><text x="4" y="16.5" font-size="12" fill="#fff" font-family="Liberation Sans">qb</text></svg>
<svg style="position:absolute;left:1092px;top:1046px" width="26" height="26" viewBox="0 0 24 24"><rect x="2" y="3" width="16" height="13" fill="#2b5dcc" stroke="#ccc"/><path d="M6 16v3h8v-3" fill="#ccc"/><circle cx="18" cy="18" r="5" fill="#d8e8d8" stroke="#8a8"/><path d="M15.5 17l2-2M20.5 19l-2 2" stroke="#1a8a1a" stroke-width="1.4"/></svg>
<svg style="position:absolute;left:1139px;top:1046px" width="26" height="26" viewBox="0 0 24 24"><rect x="3" y="2" width="16" height="21" fill="#eef8e0" stroke="#888"/><rect x="3" y="13" width="16" height="10" fill="#4ab030"/><path d="M6 6h3M6 9h8" stroke="#333"/><path d="M14 14l7-11 2 1-7 11z" fill="#f0a020"/></svg>
<svg style="position:absolute;left:1190px;top:1046px" width="26" height="26" viewBox="0 0 24 24"><path d="M17 2l5 2.5v15L17 22 7 13l-4 3-2-1V9l2-1 4 3z" fill="#9a6ae0"/><path d="M17 7v10l-6-5z" fill="#3a3a3a"/></svg>
<svg style="position:absolute;left:1239px;top:1046px" width="26" height="26" viewBox="0 0 24 24"><ellipse cx="12" cy="12" rx="10" ry="10.5" fill="#e0101a"/><ellipse cx="12" cy="12" rx="4.2" ry="7.5" fill="#3a3a3a"/></svg>
<svg style="position:absolute;left:1288px;top:1046px" width="26" height="26" viewBox="0 0 24 24"><g transform="translate(-1,-1) scale(1.35)"><path d="M3 6c1-3 5-4 8-3 3 1 5 3 6 4 2 1 1 4 0 5-1 2-3 3-4 5L9 12z" fill="#120a08"/><ellipse cx="7" cy="9.5" rx="3.8" ry="4.8" fill="#dcb89a"/><ellipse cx="6.5" cy="8" rx="2.5" ry="2.8" fill="#ead2b8"/><text x="7.5" y="18" font-size="8" font-family="Liberation Sans" fill="#d83820" font-weight="bold">64</text></g></svg>
<svg style="position:absolute;left:1336px;top:1046px" width="26" height="26" viewBox="0 0 24 24"><ellipse cx="11" cy="14" rx="9.5" ry="7" fill="#8ec8e8"/><circle cx="6" cy="12" r="1.8" fill="#e02020"/><circle cx="10" cy="9.5" r="1.8" fill="#f0c020"/><circle cx="14" cy="11" r="1.8" fill="#20a020"/><path d="M14 20L22 3" stroke="#f0a040" stroke-width="2"/></svg>
<div style="left:449px;top:1078px;width:39px;height:2px;background:#76b9ed"></div>
<div style="left:840px;top:1078px;width:31px;height:2px;background:#76b9ed"></div>
<div style="left:986px;top:1078px;width:31px;height:2px;background:#76b9ed"></div>
<div style="left:1019px;top:1078px;width:5px;height:2px;background:#76b9ed"></div>
<div style="left:1276px;top:1078px;width:48px;height:2px;background:#76b9ed"></div>
<div style="left:1330px;top:1078px;width:40px;height:2px;background:#76b9ed"></div>
<svg style="position:absolute;left:1725px;top:1051px;" width="24" height="20" viewBox="0 0 24 20"><rect x="3.5" y="3.5" width="15" height="10" fill="none" stroke="#fff"/><path d="M11 13.5v4M6 17.5h10" stroke="#fff"/><rect x="1.5" y="1.5" width="4" height="5" fill="#333" stroke="#fff"/></svg>
<div style="left:1753px;top:1052px;width:16px;height:16px;background:#181818"><svg width="16" height="16" viewBox="0 0 16 16" style="position:absolute;left:0;top:0"><path d="M6 3.5h7.5v9H6c-3 0-5-2.5-5-4.5s2-4.5 5-4.5z" fill="#76b900"/><path d="M2.5 8c1.5-2.5 4.5-2.5 6 0-1.5 2.5-4.5 2.5-6 0z" fill="none" stroke="#181818" stroke-width="1.2"/><circle cx="5.5" cy="8" r="1.2" fill="#181818"/></svg></div>
<svg style="position:absolute;left:1778px;top:1050px;" width="16" height="20" viewBox="0 0 16 20"><rect x="3.5" y="1.5" width="6" height="4" fill="none" stroke="#fff"/><rect x="2.5" y="5.5" width="8" height="12" fill="none" stroke="#fff"/><path d="M9 16l2 2 4-5" stroke="#ccc" fill="none"/></svg>
<svg style="position:absolute;left:1800px;top:1050px;" width="18" height="20" viewBox="0 0 18 20"><path d="M2 16L12 3c4 2 5 8 3 11z" fill="#ddd"/><circle cx="5" cy="15" r="3" fill="#aaa"/></svg>
<svg style="position:absolute;left:1824px;top:1050px;" width="18" height="20" viewBox="0 0 18 20"><path d="M2 7.5h3l4-4v13l-4-4H2z" fill="none" stroke="#fff" stroke-width="1.1"/><path d="M11 7c1 1.5 1 4.5 0 6M13.5 5c2 2.5 2 7.5 0 10M16 3c3 3.5 3 10.5 0 14" fill="none" stroke="#fff" stroke-width="1.1"/></svg>
<div class="t" style="left:1850px;top:1044px;color:#fff;font-size:12.5px;line-height:14px;letter-spacing:-0.9px"><span style="display:inline-block;width:60px;text-align:center">10:22</span></div>
<div class="t" style="left:1849px;top:1062px;color:#fff;font-size:12.5px;line-height:14px;letter-spacing:-0.5px"><span style="display:inline-block;width:60px;text-align:center">25/06/2022</span></div>
<div style="left:1915px;top:1040px;width:1px;height:40px;background:#555"></div></body></html>
